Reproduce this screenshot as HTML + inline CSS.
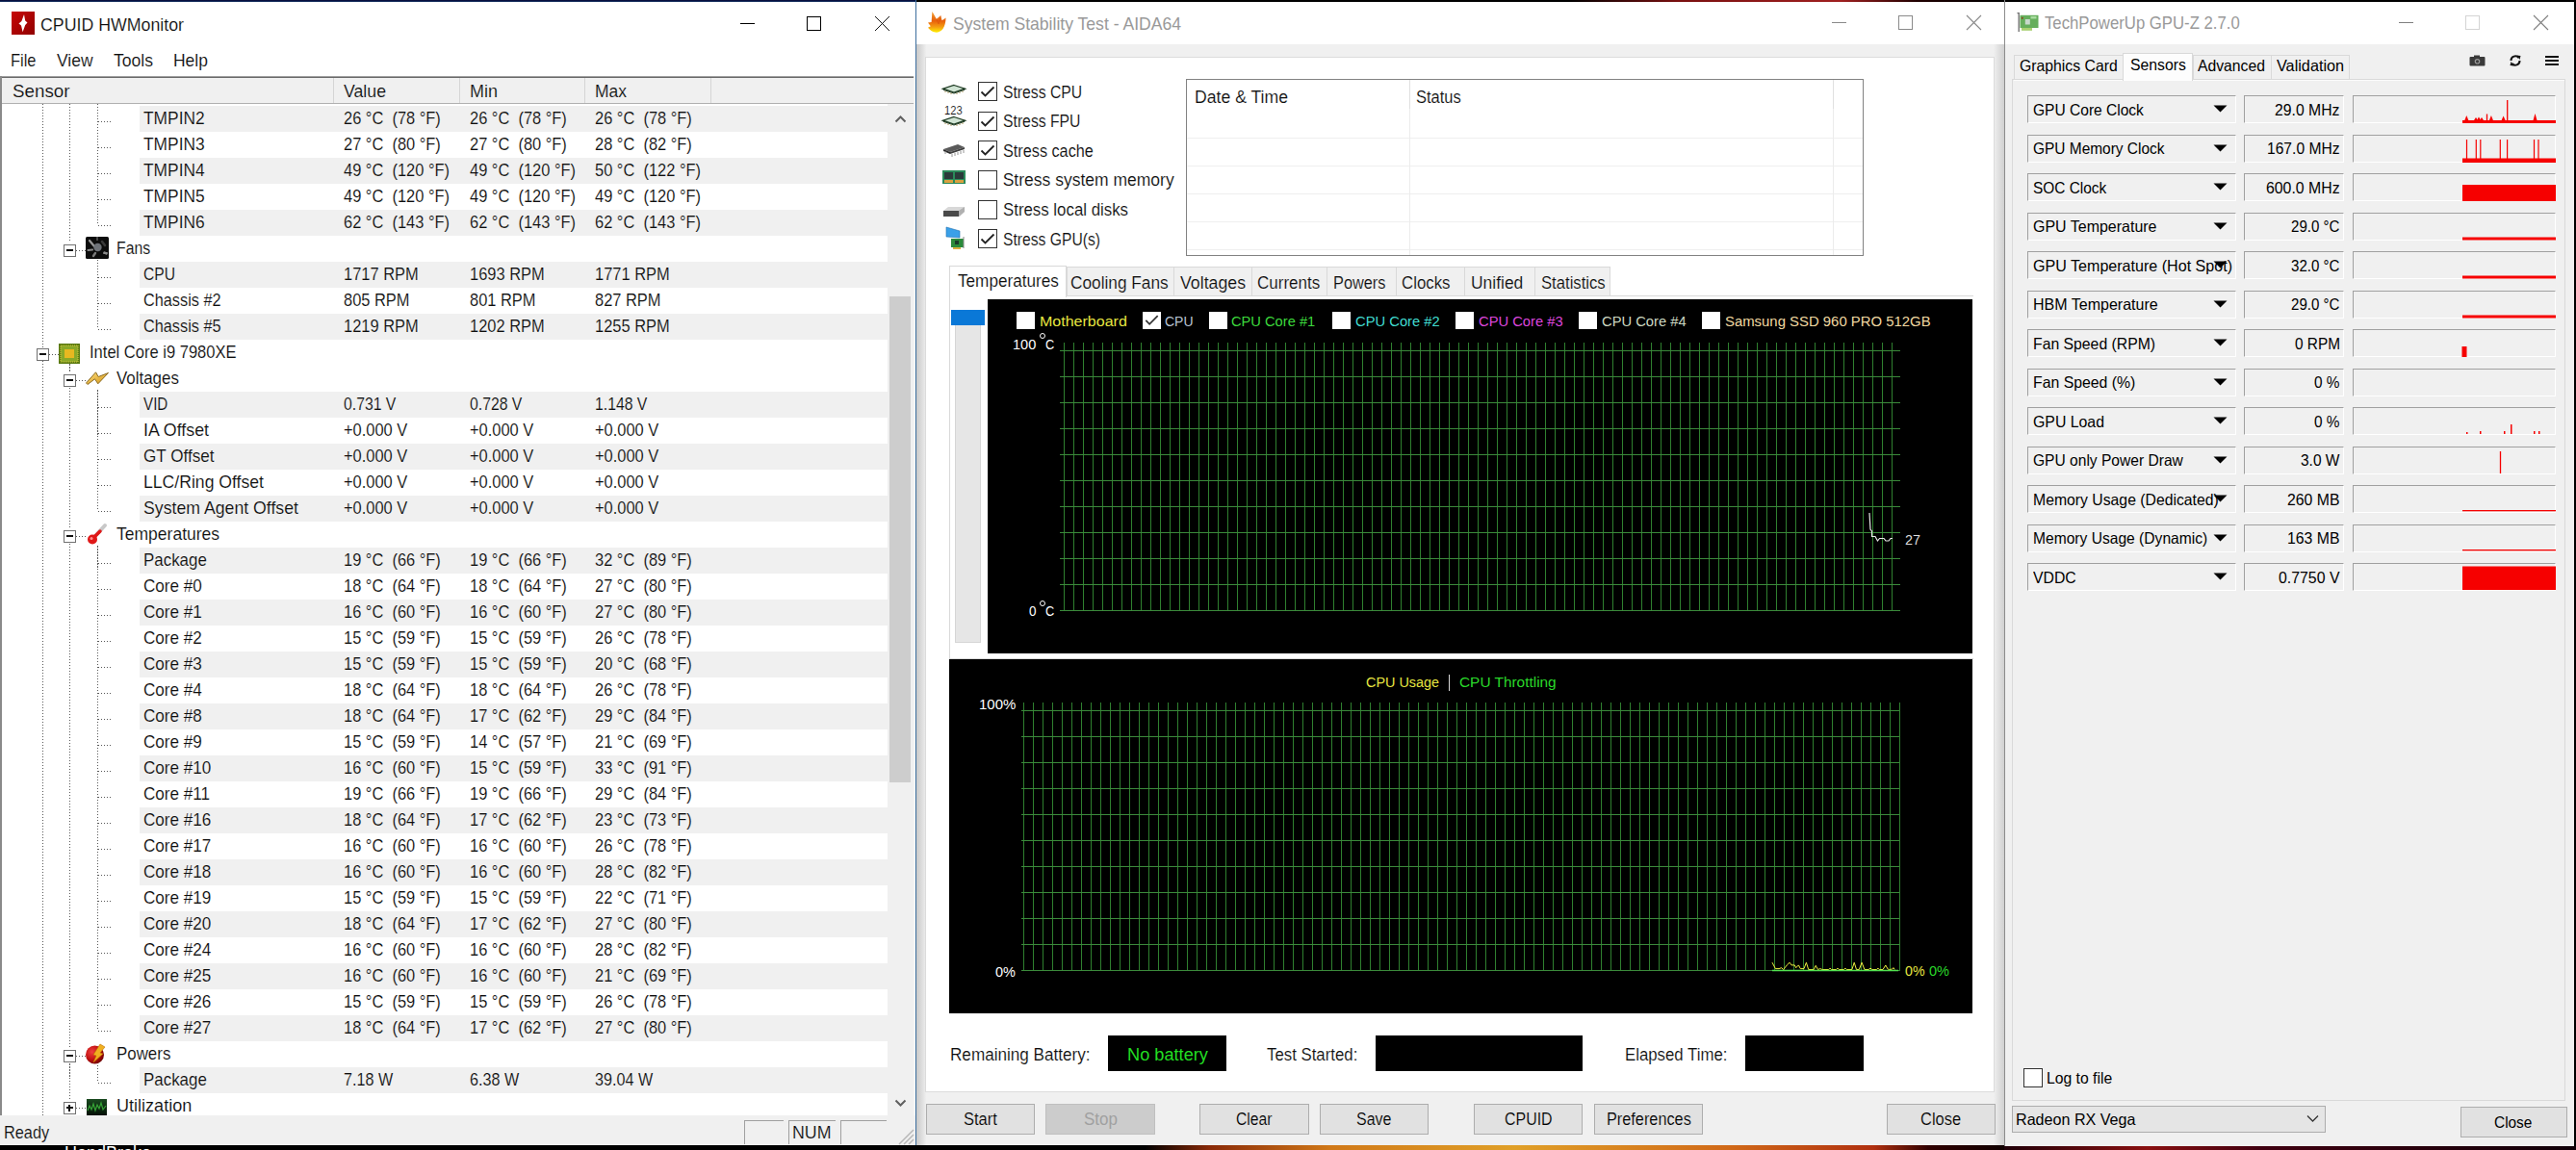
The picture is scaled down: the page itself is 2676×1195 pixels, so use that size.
<!DOCTYPE html>
<html><head><meta charset="utf-8"><title>HWMonitor AIDA64 GPU-Z</title>
<style>
html,body{margin:0;padding:0;width:2676px;height:1195px;overflow:hidden;background:#000}
.a{position:absolute}
.t{position:absolute;white-space:pre;font-family:'Liberation Sans',sans-serif;transform-origin:0 0}
.g{position:absolute;background:#2f802f}
.h{position:absolute;background:#3b8a3b}
svg.a{overflow:visible}
</style></head><body>
<div class='a' style='left:0px;top:0px;width:951px;height:1195px;background:#ffffff;'></div>
<div class='a' style='left:0;top:0;width:952px;height:2px;background:linear-gradient(#000030,#1a3a6a)'></div>
<div class='a' style='left:951px;top:0px;width:1px;height:1190px;background:#3d6e9e;'></div>
<svg class='a' style='left:12px;top:12px' width='24' height='24' viewBox='0 0 24 24'>
      <defs><linearGradient id='hwg' x1='0' y1='0' x2='1' y2='1'><stop offset='0' stop-color='#c80808'/><stop offset='1' stop-color='#900000'/></linearGradient></defs>
      <rect width='24' height='24' fill='url(#hwg)'/>
      <path d='M13 3 L14.2 9.6 L16.5 11.6 L14.2 13.9 L11.6 21.2 L10 14.4 L7.5 12.4 L10.4 10 Z' fill='#fff'/></svg>
<div class='t' style='left:41.50px;top:16.98px;font-size:18.5px;line-height:18.5px;color:#0e0e0e;-webkit-text-stroke:0.18px rgba(255,255,255,0.8);transform:scaleX(0.9599);'>CPUID HWMonitor</div>
<div class='a' style='left:769px;top:24px;width:15px;height:1px;background:#000;'></div>
<div class='a' style='left:838px;top:17px;width:15px;height:15px;border:1px solid #000;box-sizing:border-box;'></div>
<svg class='a' style='left:908px;top:16px' width='17' height='17' viewBox='0 0 17 17'><path d='M1 1 L16 16 M16 1 L1 16' stroke='#000' stroke-width='0.9'/></svg>
<div class='t' style='left:11.10px;top:54.07px;font-size:18.5px;line-height:18.5px;color:#0e0e0e;-webkit-text-stroke:0.18px rgba(255,255,255,0.8);transform:scaleX(0.8889);'>File</div>
<div class='t' style='left:59.00px;top:54.07px;font-size:18.5px;line-height:18.5px;color:#0e0e0e;-webkit-text-stroke:0.18px rgba(255,255,255,0.8);transform:scaleX(0.9430);'>View</div>
<div class='t' style='left:117.50px;top:54.07px;font-size:18.5px;line-height:18.5px;color:#0e0e0e;-webkit-text-stroke:0.18px rgba(255,255,255,0.8);transform:scaleX(0.9490);'>Tools</div>
<div class='t' style='left:180.40px;top:54.07px;font-size:18.5px;line-height:18.5px;color:#0e0e0e;-webkit-text-stroke:0.18px rgba(255,255,255,0.8);transform:scaleX(0.9432);'>Help</div>
<div class='a' style='left:0px;top:79px;width:951px;height:1px;background:#a0a0a0;'></div>
<div class='a' style='left:0px;top:80px;width:951px;height:1px;background:#696969;'></div>
<div class='a' style='left:0px;top:79px;width:2px;height:1080px;background:#8a8a8a;'></div>
<div class='a' style='left:949px;top:79px;width:2px;height:1080px;background:#f5f5f5;'></div>
<div class='a' style='left:2px;top:81px;width:947px;height:26px;background:#f0f0f0;'></div>
<div class='a' style='left:2px;top:106.5px;width:947px;height:1.5px;background:#b0b0b0;'></div>
<div class='a' style='left:346px;top:81px;width:1px;height:26px;background:#d5d5d5;'></div>
<div class='a' style='left:477px;top:81px;width:1px;height:26px;background:#d5d5d5;'></div>
<div class='a' style='left:607px;top:81px;width:1px;height:26px;background:#d5d5d5;'></div>
<div class='a' style='left:738px;top:81px;width:1px;height:26px;background:#d5d5d5;'></div>
<div class='t' style='left:12.50px;top:86.48px;font-size:18.5px;line-height:18.5px;color:#0e0e0e;-webkit-text-stroke:0.18px rgba(255,255,255,0.8);transform:scaleX(1.0149);'>Sensor</div>
<div class='t' style='left:357.00px;top:86.48px;font-size:18.5px;line-height:18.5px;color:#0e0e0e;-webkit-text-stroke:0.18px rgba(255,255,255,0.8);transform:scaleX(0.9575);'>Value</div>
<div class='t' style='left:488.00px;top:86.48px;font-size:18.5px;line-height:18.5px;color:#0e0e0e;-webkit-text-stroke:0.18px rgba(255,255,255,0.8);transform:scaleX(0.9727);'>Min</div>
<div class='t' style='left:618.00px;top:86.48px;font-size:18.5px;line-height:18.5px;color:#0e0e0e;-webkit-text-stroke:0.18px rgba(255,255,255,0.8);transform:scaleX(0.9441);'>Max</div>
<div class='a' style='left:2px;top:108px;width:920px;height:1051px;background:#ffffff;'></div>
<div class='a' style='left:922px;top:108px;width:27px;height:1051px;background:#f0f0f0;'></div>
<div class='a' style='left:924px;top:308px;width:22px;height:505px;background:#cdcdcd;'></div>
<svg class='a' style='left:929px;top:119px' width='13' height='9' viewBox='0 0 13 9'><path d='M1.5 7.5 L6.5 2.5 L11.5 7.5' stroke='#606060' stroke-width='2' fill='none'/></svg>
<svg class='a' style='left:929px;top:1142px' width='13' height='9' viewBox='0 0 13 9'><path d='M1.5 1.5 L6.5 6.5 L11.5 1.5' stroke='#606060' stroke-width='2' fill='none'/></svg>
<div class='a' style='left:44px;top:108px;width:1px;height:1051px;background:repeating-linear-gradient(to bottom,#5a5a5a 0 1.5px,transparent 1.5px 3px)'></div>
<div class='a' style='left:72px;top:108px;width:1px;height:144px;background:repeating-linear-gradient(to bottom,#5a5a5a 0 1.5px,transparent 1.5px 3px)'></div>
<div class='a' style='left:72px;top:378px;width:1px;height:9px;background:repeating-linear-gradient(to bottom,#5a5a5a 0 1.5px,transparent 1.5px 3px)'></div>
<div class='a' style='left:72px;top:400px;width:1px;height:149px;background:repeating-linear-gradient(to bottom,#5a5a5a 0 1.5px,transparent 1.5px 3px)'></div>
<div class='a' style='left:72px;top:562px;width:1px;height:527px;background:repeating-linear-gradient(to bottom,#5a5a5a 0 1.5px,transparent 1.5px 3px)'></div>
<div class='a' style='left:72px;top:1102px;width:1px;height:41px;background:repeating-linear-gradient(to bottom,#5a5a5a 0 1.5px,transparent 1.5px 3px)'></div>
<div class='a' style='left:72px;top:1156px;width:1px;height:3px;background:repeating-linear-gradient(to bottom,#5a5a5a 0 1.5px,transparent 1.5px 3px)'></div>
<div class='a' style='left:101px;top:108px;width:1px;height:126px;background:repeating-linear-gradient(to bottom,#5a5a5a 0 1.5px,transparent 1.5px 3px)'></div>
<div class='a' style='left:101px;top:270px;width:1px;height:72px;background:repeating-linear-gradient(to bottom,#5a5a5a 0 1.5px,transparent 1.5px 3px)'></div>
<div class='a' style='left:101px;top:405px;width:1px;height:126px;background:repeating-linear-gradient(to bottom,#5a5a5a 0 1.5px,transparent 1.5px 3px)'></div>
<div class='a' style='left:101px;top:567px;width:1px;height:504px;background:repeating-linear-gradient(to bottom,#5a5a5a 0 1.5px,transparent 1.5px 3px)'></div>
<div class='a' style='left:101px;top:1107px;width:1px;height:18px;background:repeating-linear-gradient(to bottom,#5a5a5a 0 1.5px,transparent 1.5px 3px)'></div>
<div class='a' style='left:145px;top:110px;width:777px;height:27px;background:#f0f0f0;'></div>
<div class='a' style='left:102px;top:126px;width:15px;height:1px;background:repeating-linear-gradient(to right,#5a5a5a 0 1.5px,transparent 1.5px 3px)'></div>
<div class='t' style='left:149.00px;top:113.25px;font-size:19px;line-height:19px;color:#0e0e0e;-webkit-text-stroke:0.18px rgba(255,255,255,0.8);transform:scaleX(0.9140);'>TMPIN2</div>
<div class='t' style='left:357.00px;top:113.25px;font-size:19px;line-height:19px;color:#0e0e0e;-webkit-text-stroke:0.18px rgba(255,255,255,0.8);transform:scaleX(0.8650);'>26 °C  (78 °F)</div>
<div class='t' style='left:488.00px;top:113.25px;font-size:19px;line-height:19px;color:#0e0e0e;-webkit-text-stroke:0.18px rgba(255,255,255,0.8);transform:scaleX(0.8650);'>26 °C  (78 °F)</div>
<div class='t' style='left:618.00px;top:113.25px;font-size:19px;line-height:19px;color:#0e0e0e;-webkit-text-stroke:0.18px rgba(255,255,255,0.8);transform:scaleX(0.8650);'>26 °C  (78 °F)</div>
<div class='a' style='left:102px;top:153px;width:15px;height:1px;background:repeating-linear-gradient(to right,#5a5a5a 0 1.5px,transparent 1.5px 3px)'></div>
<div class='t' style='left:149.00px;top:140.25px;font-size:19px;line-height:19px;color:#0e0e0e;-webkit-text-stroke:0.18px rgba(255,255,255,0.8);transform:scaleX(0.9140);'>TMPIN3</div>
<div class='t' style='left:357.00px;top:140.25px;font-size:19px;line-height:19px;color:#0e0e0e;-webkit-text-stroke:0.18px rgba(255,255,255,0.8);transform:scaleX(0.8650);'>27 °C  (80 °F)</div>
<div class='t' style='left:488.00px;top:140.25px;font-size:19px;line-height:19px;color:#0e0e0e;-webkit-text-stroke:0.18px rgba(255,255,255,0.8);transform:scaleX(0.8650);'>27 °C  (80 °F)</div>
<div class='t' style='left:618.00px;top:140.25px;font-size:19px;line-height:19px;color:#0e0e0e;-webkit-text-stroke:0.18px rgba(255,255,255,0.8);transform:scaleX(0.8650);'>28 °C  (82 °F)</div>
<div class='a' style='left:145px;top:164px;width:777px;height:27px;background:#f0f0f0;'></div>
<div class='a' style='left:102px;top:180px;width:15px;height:1px;background:repeating-linear-gradient(to right,#5a5a5a 0 1.5px,transparent 1.5px 3px)'></div>
<div class='t' style='left:149.00px;top:167.25px;font-size:19px;line-height:19px;color:#0e0e0e;-webkit-text-stroke:0.18px rgba(255,255,255,0.8);transform:scaleX(0.9140);'>TMPIN4</div>
<div class='t' style='left:357.00px;top:167.25px;font-size:19px;line-height:19px;color:#0e0e0e;-webkit-text-stroke:0.18px rgba(255,255,255,0.8);transform:scaleX(0.8650);'>49 °C  (120 °F)</div>
<div class='t' style='left:488.00px;top:167.25px;font-size:19px;line-height:19px;color:#0e0e0e;-webkit-text-stroke:0.18px rgba(255,255,255,0.8);transform:scaleX(0.8650);'>49 °C  (120 °F)</div>
<div class='t' style='left:618.00px;top:167.25px;font-size:19px;line-height:19px;color:#0e0e0e;-webkit-text-stroke:0.18px rgba(255,255,255,0.8);transform:scaleX(0.8650);'>50 °C  (122 °F)</div>
<div class='a' style='left:102px;top:207px;width:15px;height:1px;background:repeating-linear-gradient(to right,#5a5a5a 0 1.5px,transparent 1.5px 3px)'></div>
<div class='t' style='left:149.00px;top:194.25px;font-size:19px;line-height:19px;color:#0e0e0e;-webkit-text-stroke:0.18px rgba(255,255,255,0.8);transform:scaleX(0.9140);'>TMPIN5</div>
<div class='t' style='left:357.00px;top:194.25px;font-size:19px;line-height:19px;color:#0e0e0e;-webkit-text-stroke:0.18px rgba(255,255,255,0.8);transform:scaleX(0.8650);'>49 °C  (120 °F)</div>
<div class='t' style='left:488.00px;top:194.25px;font-size:19px;line-height:19px;color:#0e0e0e;-webkit-text-stroke:0.18px rgba(255,255,255,0.8);transform:scaleX(0.8650);'>49 °C  (120 °F)</div>
<div class='t' style='left:618.00px;top:194.25px;font-size:19px;line-height:19px;color:#0e0e0e;-webkit-text-stroke:0.18px rgba(255,255,255,0.8);transform:scaleX(0.8650);'>49 °C  (120 °F)</div>
<div class='a' style='left:145px;top:218px;width:777px;height:27px;background:#f0f0f0;'></div>
<div class='a' style='left:102px;top:234px;width:15px;height:1px;background:repeating-linear-gradient(to right,#5a5a5a 0 1.5px,transparent 1.5px 3px)'></div>
<div class='t' style='left:149.00px;top:221.25px;font-size:19px;line-height:19px;color:#0e0e0e;-webkit-text-stroke:0.18px rgba(255,255,255,0.8);transform:scaleX(0.9140);'>TMPIN6</div>
<div class='t' style='left:357.00px;top:221.25px;font-size:19px;line-height:19px;color:#0e0e0e;-webkit-text-stroke:0.18px rgba(255,255,255,0.8);transform:scaleX(0.8650);'>62 °C  (143 °F)</div>
<div class='t' style='left:488.00px;top:221.25px;font-size:19px;line-height:19px;color:#0e0e0e;-webkit-text-stroke:0.18px rgba(255,255,255,0.8);transform:scaleX(0.8650);'>62 °C  (143 °F)</div>
<div class='t' style='left:618.00px;top:221.25px;font-size:19px;line-height:19px;color:#0e0e0e;-webkit-text-stroke:0.18px rgba(255,255,255,0.8);transform:scaleX(0.8650);'>62 °C  (143 °F)</div>
<div class='a' style='left:79px;top:260px;width:10px;height:1px;background:repeating-linear-gradient(to right,#5a5a5a 0 1.5px,transparent 1.5px 3px)'></div>
<div class='a' style='left:65.5px;top:253.5px;width:13.5px;height:13.5px;border:1.5px solid #707070;box-sizing:border-box;background:#fff'></div>
<div class='a' style='left:68.5px;top:259.2px;width:7.5px;height:1.8px;background:#111'></div>
<svg class='a' style='left:88.5px;top:246px' width='24' height='23' viewBox='0 0 24 23'>
        <rect x='0' y='0' width='24' height='23' rx='1.5' fill='#0c0c0c'/>
        <path d='M4 4 L9 10' stroke='#9a9a9a' stroke-width='2.2' stroke-linecap='round'/>
        <path d='M2.5 14 L7 13.5' stroke='#8a8a8a' stroke-width='2.2' stroke-linecap='round'/>
        <path d='M8 20 L10 17' stroke='#7a7a7a' stroke-width='2.4' stroke-linecap='round'/>
        <path d='M19.5 16 L21.5 18' stroke='#6a6a6a' stroke-width='2' stroke-linecap='round'/>
        <path d='M19 17 L22 17' stroke='#8a8a8a' stroke-width='2' stroke-linecap='round'/>
        <path d='M17 5 L20 9' stroke='#3a3a3a' stroke-width='2.5' stroke-linecap='round'/>
        <path d='M12 0 L12 4' stroke='#5a5a5a' stroke-width='1.5'/>
        <circle cx='12.5' cy='11' r='4.2' fill='#6e7278'/></svg>
<div class='t' style='left:120.80px;top:248.25px;font-size:19px;line-height:19px;color:#0e0e0e;-webkit-text-stroke:0.18px rgba(255,255,255,0.8);transform:scaleX(0.8330);'>Fans</div>
<div class='a' style='left:145px;top:272px;width:777px;height:27px;background:#f0f0f0;'></div>
<div class='a' style='left:102px;top:288px;width:15px;height:1px;background:repeating-linear-gradient(to right,#5a5a5a 0 1.5px,transparent 1.5px 3px)'></div>
<div class='t' style='left:149.00px;top:275.25px;font-size:19px;line-height:19px;color:#0e0e0e;-webkit-text-stroke:0.18px rgba(255,255,255,0.8);transform:scaleX(0.8220);'>CPU</div>
<div class='t' style='left:357.00px;top:275.25px;font-size:19px;line-height:19px;color:#0e0e0e;-webkit-text-stroke:0.18px rgba(255,255,255,0.8);transform:scaleX(0.8650);'>1717 RPM</div>
<div class='t' style='left:488.00px;top:275.25px;font-size:19px;line-height:19px;color:#0e0e0e;-webkit-text-stroke:0.18px rgba(255,255,255,0.8);transform:scaleX(0.8650);'>1693 RPM</div>
<div class='t' style='left:618.00px;top:275.25px;font-size:19px;line-height:19px;color:#0e0e0e;-webkit-text-stroke:0.18px rgba(255,255,255,0.8);transform:scaleX(0.8650);'>1771 RPM</div>
<div class='a' style='left:102px;top:315px;width:15px;height:1px;background:repeating-linear-gradient(to right,#5a5a5a 0 1.5px,transparent 1.5px 3px)'></div>
<div class='t' style='left:149.00px;top:302.25px;font-size:19px;line-height:19px;color:#0e0e0e;-webkit-text-stroke:0.18px rgba(255,255,255,0.8);transform:scaleX(0.8570);'>Chassis #2</div>
<div class='t' style='left:357.00px;top:302.25px;font-size:19px;line-height:19px;color:#0e0e0e;-webkit-text-stroke:0.18px rgba(255,255,255,0.8);transform:scaleX(0.8650);'>805 RPM</div>
<div class='t' style='left:488.00px;top:302.25px;font-size:19px;line-height:19px;color:#0e0e0e;-webkit-text-stroke:0.18px rgba(255,255,255,0.8);transform:scaleX(0.8650);'>801 RPM</div>
<div class='t' style='left:618.00px;top:302.25px;font-size:19px;line-height:19px;color:#0e0e0e;-webkit-text-stroke:0.18px rgba(255,255,255,0.8);transform:scaleX(0.8650);'>827 RPM</div>
<div class='a' style='left:145px;top:326px;width:777px;height:27px;background:#f0f0f0;'></div>
<div class='a' style='left:102px;top:342px;width:15px;height:1px;background:repeating-linear-gradient(to right,#5a5a5a 0 1.5px,transparent 1.5px 3px)'></div>
<div class='t' style='left:149.00px;top:329.25px;font-size:19px;line-height:19px;color:#0e0e0e;-webkit-text-stroke:0.18px rgba(255,255,255,0.8);transform:scaleX(0.8570);'>Chassis #5</div>
<div class='t' style='left:357.00px;top:329.25px;font-size:19px;line-height:19px;color:#0e0e0e;-webkit-text-stroke:0.18px rgba(255,255,255,0.8);transform:scaleX(0.8650);'>1219 RPM</div>
<div class='t' style='left:488.00px;top:329.25px;font-size:19px;line-height:19px;color:#0e0e0e;-webkit-text-stroke:0.18px rgba(255,255,255,0.8);transform:scaleX(0.8650);'>1202 RPM</div>
<div class='t' style='left:618.00px;top:329.25px;font-size:19px;line-height:19px;color:#0e0e0e;-webkit-text-stroke:0.18px rgba(255,255,255,0.8);transform:scaleX(0.8650);'>1255 RPM</div>
<div class='a' style='left:51px;top:368px;width:10px;height:1px;background:repeating-linear-gradient(to right,#5a5a5a 0 1.5px,transparent 1.5px 3px)'></div>
<div class='a' style='left:37.5px;top:361.5px;width:13.5px;height:13.5px;border:1.5px solid #707070;box-sizing:border-box;background:#fff'></div>
<div class='a' style='left:40.5px;top:367.2px;width:7.5px;height:1.8px;background:#111'></div>
<svg class='a' style='left:61px;top:357px' width='22' height='21' viewBox='0 0 22 21'>
        <rect x='0' y='0' width='22' height='21' fill='#5a7a10'/>
        <rect x='2' y='2' width='18' height='17' fill='#8aa828' stroke='#d8c840' stroke-dasharray='1 1'/>
        <rect x='6' y='6' width='10' height='9' fill='#e8b820'/></svg>
<div class='t' style='left:92.60px;top:356.25px;font-size:19px;line-height:19px;color:#0e0e0e;-webkit-text-stroke:0.18px rgba(255,255,255,0.8);transform:scaleX(0.8700);'>Intel Core i9 7980XE</div>
<div class='a' style='left:79px;top:395px;width:10px;height:1px;background:repeating-linear-gradient(to right,#5a5a5a 0 1.5px,transparent 1.5px 3px)'></div>
<div class='a' style='left:65.5px;top:388.5px;width:13.5px;height:13.5px;border:1.5px solid #707070;box-sizing:border-box;background:#fff'></div>
<div class='a' style='left:68.5px;top:394.2px;width:7.5px;height:1.8px;background:#111'></div>
<svg class='a' style='left:88px;top:385px' width='26' height='16' viewBox='0 0 26 16'>
        <defs><linearGradient id='vg' x1='0' y1='0' x2='1' y2='1'><stop offset='0' stop-color='#ffe080'/><stop offset='1' stop-color='#d09010'/></linearGradient></defs>
        <path d='M1.5 13 L11.5 1.8 L14.2 6.5 L24.5 2.5 L13.8 13.8 L10.5 8.8 L3 14.5 Z' fill='url(#vg)' stroke='#8a6a20' stroke-width='1'/></svg>
<div class='t' style='left:120.80px;top:383.25px;font-size:19px;line-height:19px;color:#0e0e0e;-webkit-text-stroke:0.18px rgba(255,255,255,0.8);transform:scaleX(0.8900);'>Voltages</div>
<div class='a' style='left:145px;top:407px;width:777px;height:27px;background:#f0f0f0;'></div>
<div class='a' style='left:102px;top:423px;width:15px;height:1px;background:repeating-linear-gradient(to right,#5a5a5a 0 1.5px,transparent 1.5px 3px)'></div>
<div class='t' style='left:149.00px;top:410.25px;font-size:19px;line-height:19px;color:#0e0e0e;-webkit-text-stroke:0.18px rgba(255,255,255,0.8);transform:scaleX(0.8000);'>VID</div>
<div class='t' style='left:357.00px;top:410.25px;font-size:19px;line-height:19px;color:#0e0e0e;-webkit-text-stroke:0.18px rgba(255,255,255,0.8);transform:scaleX(0.8300);'>0.731 V</div>
<div class='t' style='left:488.00px;top:410.25px;font-size:19px;line-height:19px;color:#0e0e0e;-webkit-text-stroke:0.18px rgba(255,255,255,0.8);transform:scaleX(0.8300);'>0.728 V</div>
<div class='t' style='left:618.00px;top:410.25px;font-size:19px;line-height:19px;color:#0e0e0e;-webkit-text-stroke:0.18px rgba(255,255,255,0.8);transform:scaleX(0.8300);'>1.148 V</div>
<div class='a' style='left:102px;top:450px;width:15px;height:1px;background:repeating-linear-gradient(to right,#5a5a5a 0 1.5px,transparent 1.5px 3px)'></div>
<div class='t' style='left:149.00px;top:437.25px;font-size:19px;line-height:19px;color:#0e0e0e;-webkit-text-stroke:0.18px rgba(255,255,255,0.8);transform:scaleX(0.9375);'>IA Offset</div>
<div class='t' style='left:357.00px;top:437.25px;font-size:19px;line-height:19px;color:#0e0e0e;-webkit-text-stroke:0.18px rgba(255,255,255,0.8);transform:scaleX(0.8650);'>+0.000 V</div>
<div class='t' style='left:488.00px;top:437.25px;font-size:19px;line-height:19px;color:#0e0e0e;-webkit-text-stroke:0.18px rgba(255,255,255,0.8);transform:scaleX(0.8650);'>+0.000 V</div>
<div class='t' style='left:618.00px;top:437.25px;font-size:19px;line-height:19px;color:#0e0e0e;-webkit-text-stroke:0.18px rgba(255,255,255,0.8);transform:scaleX(0.8650);'>+0.000 V</div>
<div class='a' style='left:145px;top:461px;width:777px;height:27px;background:#f0f0f0;'></div>
<div class='a' style='left:102px;top:477px;width:15px;height:1px;background:repeating-linear-gradient(to right,#5a5a5a 0 1.5px,transparent 1.5px 3px)'></div>
<div class='t' style='left:149.00px;top:464.25px;font-size:19px;line-height:19px;color:#0e0e0e;-webkit-text-stroke:0.18px rgba(255,255,255,0.8);transform:scaleX(0.9000);'>GT Offset</div>
<div class='t' style='left:357.00px;top:464.25px;font-size:19px;line-height:19px;color:#0e0e0e;-webkit-text-stroke:0.18px rgba(255,255,255,0.8);transform:scaleX(0.8650);'>+0.000 V</div>
<div class='t' style='left:488.00px;top:464.25px;font-size:19px;line-height:19px;color:#0e0e0e;-webkit-text-stroke:0.18px rgba(255,255,255,0.8);transform:scaleX(0.8650);'>+0.000 V</div>
<div class='t' style='left:618.00px;top:464.25px;font-size:19px;line-height:19px;color:#0e0e0e;-webkit-text-stroke:0.18px rgba(255,255,255,0.8);transform:scaleX(0.8650);'>+0.000 V</div>
<div class='a' style='left:102px;top:504px;width:15px;height:1px;background:repeating-linear-gradient(to right,#5a5a5a 0 1.5px,transparent 1.5px 3px)'></div>
<div class='t' style='left:149.00px;top:491.25px;font-size:19px;line-height:19px;color:#0e0e0e;-webkit-text-stroke:0.18px rgba(255,255,255,0.8);transform:scaleX(0.9270);'>LLC/Ring Offset</div>
<div class='t' style='left:357.00px;top:491.25px;font-size:19px;line-height:19px;color:#0e0e0e;-webkit-text-stroke:0.18px rgba(255,255,255,0.8);transform:scaleX(0.8650);'>+0.000 V</div>
<div class='t' style='left:488.00px;top:491.25px;font-size:19px;line-height:19px;color:#0e0e0e;-webkit-text-stroke:0.18px rgba(255,255,255,0.8);transform:scaleX(0.8650);'>+0.000 V</div>
<div class='t' style='left:618.00px;top:491.25px;font-size:19px;line-height:19px;color:#0e0e0e;-webkit-text-stroke:0.18px rgba(255,255,255,0.8);transform:scaleX(0.8650);'>+0.000 V</div>
<div class='a' style='left:145px;top:515px;width:777px;height:27px;background:#f0f0f0;'></div>
<div class='a' style='left:102px;top:531px;width:15px;height:1px;background:repeating-linear-gradient(to right,#5a5a5a 0 1.5px,transparent 1.5px 3px)'></div>
<div class='t' style='left:149.00px;top:518.25px;font-size:19px;line-height:19px;color:#0e0e0e;-webkit-text-stroke:0.18px rgba(255,255,255,0.8);transform:scaleX(0.9310);'>System Agent Offset</div>
<div class='t' style='left:357.00px;top:518.25px;font-size:19px;line-height:19px;color:#0e0e0e;-webkit-text-stroke:0.18px rgba(255,255,255,0.8);transform:scaleX(0.8650);'>+0.000 V</div>
<div class='t' style='left:488.00px;top:518.25px;font-size:19px;line-height:19px;color:#0e0e0e;-webkit-text-stroke:0.18px rgba(255,255,255,0.8);transform:scaleX(0.8650);'>+0.000 V</div>
<div class='t' style='left:618.00px;top:518.25px;font-size:19px;line-height:19px;color:#0e0e0e;-webkit-text-stroke:0.18px rgba(255,255,255,0.8);transform:scaleX(0.8650);'>+0.000 V</div>
<div class='a' style='left:79px;top:557px;width:10px;height:1px;background:repeating-linear-gradient(to right,#5a5a5a 0 1.5px,transparent 1.5px 3px)'></div>
<div class='a' style='left:65.5px;top:550.5px;width:13.5px;height:13.5px;border:1.5px solid #707070;box-sizing:border-box;background:#fff'></div>
<div class='a' style='left:68.5px;top:556.2px;width:7.5px;height:1.8px;background:#111'></div>
<svg class='a' style='left:89px;top:543px' width='24' height='24' viewBox='0 0 24 24'>
        <path d='M20 3 L9 15' stroke='#c8c8c8' stroke-width='4' stroke-linecap='round'/>
        <path d='M15 9 L8 16' stroke='#e01818' stroke-width='3.5' stroke-linecap='round'/>
        <circle cx='7' cy='17.5' r='5' fill='#e01818'/><circle cx='6' cy='16.5' r='1.5' fill='#ff9090'/></svg>
<div class='t' style='left:120.80px;top:545.25px;font-size:19px;line-height:19px;color:#0e0e0e;-webkit-text-stroke:0.18px rgba(255,255,255,0.8);transform:scaleX(0.9220);'>Temperatures</div>
<div class='a' style='left:145px;top:569px;width:777px;height:27px;background:#f0f0f0;'></div>
<div class='a' style='left:102px;top:585px;width:15px;height:1px;background:repeating-linear-gradient(to right,#5a5a5a 0 1.5px,transparent 1.5px 3px)'></div>
<div class='t' style='left:149.00px;top:572.25px;font-size:19px;line-height:19px;color:#0e0e0e;-webkit-text-stroke:0.18px rgba(255,255,255,0.8);transform:scaleX(0.8900);'>Package</div>
<div class='t' style='left:357.00px;top:572.25px;font-size:19px;line-height:19px;color:#0e0e0e;-webkit-text-stroke:0.18px rgba(255,255,255,0.8);transform:scaleX(0.8650);'>19 °C  (66 °F)</div>
<div class='t' style='left:488.00px;top:572.25px;font-size:19px;line-height:19px;color:#0e0e0e;-webkit-text-stroke:0.18px rgba(255,255,255,0.8);transform:scaleX(0.8650);'>19 °C  (66 °F)</div>
<div class='t' style='left:618.00px;top:572.25px;font-size:19px;line-height:19px;color:#0e0e0e;-webkit-text-stroke:0.18px rgba(255,255,255,0.8);transform:scaleX(0.8650);'>32 °C  (89 °F)</div>
<div class='a' style='left:102px;top:612px;width:15px;height:1px;background:repeating-linear-gradient(to right,#5a5a5a 0 1.5px,transparent 1.5px 3px)'></div>
<div class='t' style='left:149.00px;top:599.25px;font-size:19px;line-height:19px;color:#0e0e0e;-webkit-text-stroke:0.18px rgba(255,255,255,0.8);transform:scaleX(0.9000);'>Core #0</div>
<div class='t' style='left:357.00px;top:599.25px;font-size:19px;line-height:19px;color:#0e0e0e;-webkit-text-stroke:0.18px rgba(255,255,255,0.8);transform:scaleX(0.8650);'>18 °C  (64 °F)</div>
<div class='t' style='left:488.00px;top:599.25px;font-size:19px;line-height:19px;color:#0e0e0e;-webkit-text-stroke:0.18px rgba(255,255,255,0.8);transform:scaleX(0.8650);'>18 °C  (64 °F)</div>
<div class='t' style='left:618.00px;top:599.25px;font-size:19px;line-height:19px;color:#0e0e0e;-webkit-text-stroke:0.18px rgba(255,255,255,0.8);transform:scaleX(0.8650);'>27 °C  (80 °F)</div>
<div class='a' style='left:145px;top:623px;width:777px;height:27px;background:#f0f0f0;'></div>
<div class='a' style='left:102px;top:639px;width:15px;height:1px;background:repeating-linear-gradient(to right,#5a5a5a 0 1.5px,transparent 1.5px 3px)'></div>
<div class='t' style='left:149.00px;top:626.25px;font-size:19px;line-height:19px;color:#0e0e0e;-webkit-text-stroke:0.18px rgba(255,255,255,0.8);transform:scaleX(0.9000);'>Core #1</div>
<div class='t' style='left:357.00px;top:626.25px;font-size:19px;line-height:19px;color:#0e0e0e;-webkit-text-stroke:0.18px rgba(255,255,255,0.8);transform:scaleX(0.8650);'>16 °C  (60 °F)</div>
<div class='t' style='left:488.00px;top:626.25px;font-size:19px;line-height:19px;color:#0e0e0e;-webkit-text-stroke:0.18px rgba(255,255,255,0.8);transform:scaleX(0.8650);'>16 °C  (60 °F)</div>
<div class='t' style='left:618.00px;top:626.25px;font-size:19px;line-height:19px;color:#0e0e0e;-webkit-text-stroke:0.18px rgba(255,255,255,0.8);transform:scaleX(0.8650);'>27 °C  (80 °F)</div>
<div class='a' style='left:102px;top:666px;width:15px;height:1px;background:repeating-linear-gradient(to right,#5a5a5a 0 1.5px,transparent 1.5px 3px)'></div>
<div class='t' style='left:149.00px;top:653.25px;font-size:19px;line-height:19px;color:#0e0e0e;-webkit-text-stroke:0.18px rgba(255,255,255,0.8);transform:scaleX(0.9000);'>Core #2</div>
<div class='t' style='left:357.00px;top:653.25px;font-size:19px;line-height:19px;color:#0e0e0e;-webkit-text-stroke:0.18px rgba(255,255,255,0.8);transform:scaleX(0.8650);'>15 °C  (59 °F)</div>
<div class='t' style='left:488.00px;top:653.25px;font-size:19px;line-height:19px;color:#0e0e0e;-webkit-text-stroke:0.18px rgba(255,255,255,0.8);transform:scaleX(0.8650);'>15 °C  (59 °F)</div>
<div class='t' style='left:618.00px;top:653.25px;font-size:19px;line-height:19px;color:#0e0e0e;-webkit-text-stroke:0.18px rgba(255,255,255,0.8);transform:scaleX(0.8650);'>26 °C  (78 °F)</div>
<div class='a' style='left:145px;top:677px;width:777px;height:27px;background:#f0f0f0;'></div>
<div class='a' style='left:102px;top:693px;width:15px;height:1px;background:repeating-linear-gradient(to right,#5a5a5a 0 1.5px,transparent 1.5px 3px)'></div>
<div class='t' style='left:149.00px;top:680.25px;font-size:19px;line-height:19px;color:#0e0e0e;-webkit-text-stroke:0.18px rgba(255,255,255,0.8);transform:scaleX(0.9000);'>Core #3</div>
<div class='t' style='left:357.00px;top:680.25px;font-size:19px;line-height:19px;color:#0e0e0e;-webkit-text-stroke:0.18px rgba(255,255,255,0.8);transform:scaleX(0.8650);'>15 °C  (59 °F)</div>
<div class='t' style='left:488.00px;top:680.25px;font-size:19px;line-height:19px;color:#0e0e0e;-webkit-text-stroke:0.18px rgba(255,255,255,0.8);transform:scaleX(0.8650);'>15 °C  (59 °F)</div>
<div class='t' style='left:618.00px;top:680.25px;font-size:19px;line-height:19px;color:#0e0e0e;-webkit-text-stroke:0.18px rgba(255,255,255,0.8);transform:scaleX(0.8650);'>20 °C  (68 °F)</div>
<div class='a' style='left:102px;top:720px;width:15px;height:1px;background:repeating-linear-gradient(to right,#5a5a5a 0 1.5px,transparent 1.5px 3px)'></div>
<div class='t' style='left:149.00px;top:707.25px;font-size:19px;line-height:19px;color:#0e0e0e;-webkit-text-stroke:0.18px rgba(255,255,255,0.8);transform:scaleX(0.9000);'>Core #4</div>
<div class='t' style='left:357.00px;top:707.25px;font-size:19px;line-height:19px;color:#0e0e0e;-webkit-text-stroke:0.18px rgba(255,255,255,0.8);transform:scaleX(0.8650);'>18 °C  (64 °F)</div>
<div class='t' style='left:488.00px;top:707.25px;font-size:19px;line-height:19px;color:#0e0e0e;-webkit-text-stroke:0.18px rgba(255,255,255,0.8);transform:scaleX(0.8650);'>18 °C  (64 °F)</div>
<div class='t' style='left:618.00px;top:707.25px;font-size:19px;line-height:19px;color:#0e0e0e;-webkit-text-stroke:0.18px rgba(255,255,255,0.8);transform:scaleX(0.8650);'>26 °C  (78 °F)</div>
<div class='a' style='left:145px;top:731px;width:777px;height:27px;background:#f0f0f0;'></div>
<div class='a' style='left:102px;top:747px;width:15px;height:1px;background:repeating-linear-gradient(to right,#5a5a5a 0 1.5px,transparent 1.5px 3px)'></div>
<div class='t' style='left:149.00px;top:734.25px;font-size:19px;line-height:19px;color:#0e0e0e;-webkit-text-stroke:0.18px rgba(255,255,255,0.8);transform:scaleX(0.9000);'>Core #8</div>
<div class='t' style='left:357.00px;top:734.25px;font-size:19px;line-height:19px;color:#0e0e0e;-webkit-text-stroke:0.18px rgba(255,255,255,0.8);transform:scaleX(0.8650);'>18 °C  (64 °F)</div>
<div class='t' style='left:488.00px;top:734.25px;font-size:19px;line-height:19px;color:#0e0e0e;-webkit-text-stroke:0.18px rgba(255,255,255,0.8);transform:scaleX(0.8650);'>17 °C  (62 °F)</div>
<div class='t' style='left:618.00px;top:734.25px;font-size:19px;line-height:19px;color:#0e0e0e;-webkit-text-stroke:0.18px rgba(255,255,255,0.8);transform:scaleX(0.8650);'>29 °C  (84 °F)</div>
<div class='a' style='left:102px;top:774px;width:15px;height:1px;background:repeating-linear-gradient(to right,#5a5a5a 0 1.5px,transparent 1.5px 3px)'></div>
<div class='t' style='left:149.00px;top:761.25px;font-size:19px;line-height:19px;color:#0e0e0e;-webkit-text-stroke:0.18px rgba(255,255,255,0.8);transform:scaleX(0.9000);'>Core #9</div>
<div class='t' style='left:357.00px;top:761.25px;font-size:19px;line-height:19px;color:#0e0e0e;-webkit-text-stroke:0.18px rgba(255,255,255,0.8);transform:scaleX(0.8650);'>15 °C  (59 °F)</div>
<div class='t' style='left:488.00px;top:761.25px;font-size:19px;line-height:19px;color:#0e0e0e;-webkit-text-stroke:0.18px rgba(255,255,255,0.8);transform:scaleX(0.8650);'>14 °C  (57 °F)</div>
<div class='t' style='left:618.00px;top:761.25px;font-size:19px;line-height:19px;color:#0e0e0e;-webkit-text-stroke:0.18px rgba(255,255,255,0.8);transform:scaleX(0.8650);'>21 °C  (69 °F)</div>
<div class='a' style='left:145px;top:785px;width:777px;height:27px;background:#f0f0f0;'></div>
<div class='a' style='left:102px;top:801px;width:15px;height:1px;background:repeating-linear-gradient(to right,#5a5a5a 0 1.5px,transparent 1.5px 3px)'></div>
<div class='t' style='left:149.00px;top:788.25px;font-size:19px;line-height:19px;color:#0e0e0e;-webkit-text-stroke:0.18px rgba(255,255,255,0.8);transform:scaleX(0.9000);'>Core #10</div>
<div class='t' style='left:357.00px;top:788.25px;font-size:19px;line-height:19px;color:#0e0e0e;-webkit-text-stroke:0.18px rgba(255,255,255,0.8);transform:scaleX(0.8650);'>16 °C  (60 °F)</div>
<div class='t' style='left:488.00px;top:788.25px;font-size:19px;line-height:19px;color:#0e0e0e;-webkit-text-stroke:0.18px rgba(255,255,255,0.8);transform:scaleX(0.8650);'>15 °C  (59 °F)</div>
<div class='t' style='left:618.00px;top:788.25px;font-size:19px;line-height:19px;color:#0e0e0e;-webkit-text-stroke:0.18px rgba(255,255,255,0.8);transform:scaleX(0.8650);'>33 °C  (91 °F)</div>
<div class='a' style='left:102px;top:828px;width:15px;height:1px;background:repeating-linear-gradient(to right,#5a5a5a 0 1.5px,transparent 1.5px 3px)'></div>
<div class='t' style='left:149.00px;top:815.25px;font-size:19px;line-height:19px;color:#0e0e0e;-webkit-text-stroke:0.18px rgba(255,255,255,0.8);transform:scaleX(0.9000);'>Core #11</div>
<div class='t' style='left:357.00px;top:815.25px;font-size:19px;line-height:19px;color:#0e0e0e;-webkit-text-stroke:0.18px rgba(255,255,255,0.8);transform:scaleX(0.8650);'>19 °C  (66 °F)</div>
<div class='t' style='left:488.00px;top:815.25px;font-size:19px;line-height:19px;color:#0e0e0e;-webkit-text-stroke:0.18px rgba(255,255,255,0.8);transform:scaleX(0.8650);'>19 °C  (66 °F)</div>
<div class='t' style='left:618.00px;top:815.25px;font-size:19px;line-height:19px;color:#0e0e0e;-webkit-text-stroke:0.18px rgba(255,255,255,0.8);transform:scaleX(0.8650);'>29 °C  (84 °F)</div>
<div class='a' style='left:145px;top:839px;width:777px;height:27px;background:#f0f0f0;'></div>
<div class='a' style='left:102px;top:855px;width:15px;height:1px;background:repeating-linear-gradient(to right,#5a5a5a 0 1.5px,transparent 1.5px 3px)'></div>
<div class='t' style='left:149.00px;top:842.25px;font-size:19px;line-height:19px;color:#0e0e0e;-webkit-text-stroke:0.18px rgba(255,255,255,0.8);transform:scaleX(0.9000);'>Core #16</div>
<div class='t' style='left:357.00px;top:842.25px;font-size:19px;line-height:19px;color:#0e0e0e;-webkit-text-stroke:0.18px rgba(255,255,255,0.8);transform:scaleX(0.8650);'>18 °C  (64 °F)</div>
<div class='t' style='left:488.00px;top:842.25px;font-size:19px;line-height:19px;color:#0e0e0e;-webkit-text-stroke:0.18px rgba(255,255,255,0.8);transform:scaleX(0.8650);'>17 °C  (62 °F)</div>
<div class='t' style='left:618.00px;top:842.25px;font-size:19px;line-height:19px;color:#0e0e0e;-webkit-text-stroke:0.18px rgba(255,255,255,0.8);transform:scaleX(0.8650);'>23 °C  (73 °F)</div>
<div class='a' style='left:102px;top:882px;width:15px;height:1px;background:repeating-linear-gradient(to right,#5a5a5a 0 1.5px,transparent 1.5px 3px)'></div>
<div class='t' style='left:149.00px;top:869.25px;font-size:19px;line-height:19px;color:#0e0e0e;-webkit-text-stroke:0.18px rgba(255,255,255,0.8);transform:scaleX(0.9000);'>Core #17</div>
<div class='t' style='left:357.00px;top:869.25px;font-size:19px;line-height:19px;color:#0e0e0e;-webkit-text-stroke:0.18px rgba(255,255,255,0.8);transform:scaleX(0.8650);'>16 °C  (60 °F)</div>
<div class='t' style='left:488.00px;top:869.25px;font-size:19px;line-height:19px;color:#0e0e0e;-webkit-text-stroke:0.18px rgba(255,255,255,0.8);transform:scaleX(0.8650);'>16 °C  (60 °F)</div>
<div class='t' style='left:618.00px;top:869.25px;font-size:19px;line-height:19px;color:#0e0e0e;-webkit-text-stroke:0.18px rgba(255,255,255,0.8);transform:scaleX(0.8650);'>26 °C  (78 °F)</div>
<div class='a' style='left:145px;top:893px;width:777px;height:27px;background:#f0f0f0;'></div>
<div class='a' style='left:102px;top:909px;width:15px;height:1px;background:repeating-linear-gradient(to right,#5a5a5a 0 1.5px,transparent 1.5px 3px)'></div>
<div class='t' style='left:149.00px;top:896.25px;font-size:19px;line-height:19px;color:#0e0e0e;-webkit-text-stroke:0.18px rgba(255,255,255,0.8);transform:scaleX(0.9000);'>Core #18</div>
<div class='t' style='left:357.00px;top:896.25px;font-size:19px;line-height:19px;color:#0e0e0e;-webkit-text-stroke:0.18px rgba(255,255,255,0.8);transform:scaleX(0.8650);'>16 °C  (60 °F)</div>
<div class='t' style='left:488.00px;top:896.25px;font-size:19px;line-height:19px;color:#0e0e0e;-webkit-text-stroke:0.18px rgba(255,255,255,0.8);transform:scaleX(0.8650);'>16 °C  (60 °F)</div>
<div class='t' style='left:618.00px;top:896.25px;font-size:19px;line-height:19px;color:#0e0e0e;-webkit-text-stroke:0.18px rgba(255,255,255,0.8);transform:scaleX(0.8650);'>28 °C  (82 °F)</div>
<div class='a' style='left:102px;top:936px;width:15px;height:1px;background:repeating-linear-gradient(to right,#5a5a5a 0 1.5px,transparent 1.5px 3px)'></div>
<div class='t' style='left:149.00px;top:923.25px;font-size:19px;line-height:19px;color:#0e0e0e;-webkit-text-stroke:0.18px rgba(255,255,255,0.8);transform:scaleX(0.9000);'>Core #19</div>
<div class='t' style='left:357.00px;top:923.25px;font-size:19px;line-height:19px;color:#0e0e0e;-webkit-text-stroke:0.18px rgba(255,255,255,0.8);transform:scaleX(0.8650);'>15 °C  (59 °F)</div>
<div class='t' style='left:488.00px;top:923.25px;font-size:19px;line-height:19px;color:#0e0e0e;-webkit-text-stroke:0.18px rgba(255,255,255,0.8);transform:scaleX(0.8650);'>15 °C  (59 °F)</div>
<div class='t' style='left:618.00px;top:923.25px;font-size:19px;line-height:19px;color:#0e0e0e;-webkit-text-stroke:0.18px rgba(255,255,255,0.8);transform:scaleX(0.8650);'>22 °C  (71 °F)</div>
<div class='a' style='left:145px;top:947px;width:777px;height:27px;background:#f0f0f0;'></div>
<div class='a' style='left:102px;top:963px;width:15px;height:1px;background:repeating-linear-gradient(to right,#5a5a5a 0 1.5px,transparent 1.5px 3px)'></div>
<div class='t' style='left:149.00px;top:950.25px;font-size:19px;line-height:19px;color:#0e0e0e;-webkit-text-stroke:0.18px rgba(255,255,255,0.8);transform:scaleX(0.9000);'>Core #20</div>
<div class='t' style='left:357.00px;top:950.25px;font-size:19px;line-height:19px;color:#0e0e0e;-webkit-text-stroke:0.18px rgba(255,255,255,0.8);transform:scaleX(0.8650);'>18 °C  (64 °F)</div>
<div class='t' style='left:488.00px;top:950.25px;font-size:19px;line-height:19px;color:#0e0e0e;-webkit-text-stroke:0.18px rgba(255,255,255,0.8);transform:scaleX(0.8650);'>17 °C  (62 °F)</div>
<div class='t' style='left:618.00px;top:950.25px;font-size:19px;line-height:19px;color:#0e0e0e;-webkit-text-stroke:0.18px rgba(255,255,255,0.8);transform:scaleX(0.8650);'>27 °C  (80 °F)</div>
<div class='a' style='left:102px;top:990px;width:15px;height:1px;background:repeating-linear-gradient(to right,#5a5a5a 0 1.5px,transparent 1.5px 3px)'></div>
<div class='t' style='left:149.00px;top:977.25px;font-size:19px;line-height:19px;color:#0e0e0e;-webkit-text-stroke:0.18px rgba(255,255,255,0.8);transform:scaleX(0.9000);'>Core #24</div>
<div class='t' style='left:357.00px;top:977.25px;font-size:19px;line-height:19px;color:#0e0e0e;-webkit-text-stroke:0.18px rgba(255,255,255,0.8);transform:scaleX(0.8650);'>16 °C  (60 °F)</div>
<div class='t' style='left:488.00px;top:977.25px;font-size:19px;line-height:19px;color:#0e0e0e;-webkit-text-stroke:0.18px rgba(255,255,255,0.8);transform:scaleX(0.8650);'>16 °C  (60 °F)</div>
<div class='t' style='left:618.00px;top:977.25px;font-size:19px;line-height:19px;color:#0e0e0e;-webkit-text-stroke:0.18px rgba(255,255,255,0.8);transform:scaleX(0.8650);'>28 °C  (82 °F)</div>
<div class='a' style='left:145px;top:1001px;width:777px;height:27px;background:#f0f0f0;'></div>
<div class='a' style='left:102px;top:1017px;width:15px;height:1px;background:repeating-linear-gradient(to right,#5a5a5a 0 1.5px,transparent 1.5px 3px)'></div>
<div class='t' style='left:149.00px;top:1004.25px;font-size:19px;line-height:19px;color:#0e0e0e;-webkit-text-stroke:0.18px rgba(255,255,255,0.8);transform:scaleX(0.9000);'>Core #25</div>
<div class='t' style='left:357.00px;top:1004.25px;font-size:19px;line-height:19px;color:#0e0e0e;-webkit-text-stroke:0.18px rgba(255,255,255,0.8);transform:scaleX(0.8650);'>16 °C  (60 °F)</div>
<div class='t' style='left:488.00px;top:1004.25px;font-size:19px;line-height:19px;color:#0e0e0e;-webkit-text-stroke:0.18px rgba(255,255,255,0.8);transform:scaleX(0.8650);'>16 °C  (60 °F)</div>
<div class='t' style='left:618.00px;top:1004.25px;font-size:19px;line-height:19px;color:#0e0e0e;-webkit-text-stroke:0.18px rgba(255,255,255,0.8);transform:scaleX(0.8650);'>21 °C  (69 °F)</div>
<div class='a' style='left:102px;top:1044px;width:15px;height:1px;background:repeating-linear-gradient(to right,#5a5a5a 0 1.5px,transparent 1.5px 3px)'></div>
<div class='t' style='left:149.00px;top:1031.25px;font-size:19px;line-height:19px;color:#0e0e0e;-webkit-text-stroke:0.18px rgba(255,255,255,0.8);transform:scaleX(0.9000);'>Core #26</div>
<div class='t' style='left:357.00px;top:1031.25px;font-size:19px;line-height:19px;color:#0e0e0e;-webkit-text-stroke:0.18px rgba(255,255,255,0.8);transform:scaleX(0.8650);'>15 °C  (59 °F)</div>
<div class='t' style='left:488.00px;top:1031.25px;font-size:19px;line-height:19px;color:#0e0e0e;-webkit-text-stroke:0.18px rgba(255,255,255,0.8);transform:scaleX(0.8650);'>15 °C  (59 °F)</div>
<div class='t' style='left:618.00px;top:1031.25px;font-size:19px;line-height:19px;color:#0e0e0e;-webkit-text-stroke:0.18px rgba(255,255,255,0.8);transform:scaleX(0.8650);'>26 °C  (78 °F)</div>
<div class='a' style='left:145px;top:1055px;width:777px;height:27px;background:#f0f0f0;'></div>
<div class='a' style='left:102px;top:1071px;width:15px;height:1px;background:repeating-linear-gradient(to right,#5a5a5a 0 1.5px,transparent 1.5px 3px)'></div>
<div class='t' style='left:149.00px;top:1058.25px;font-size:19px;line-height:19px;color:#0e0e0e;-webkit-text-stroke:0.18px rgba(255,255,255,0.8);transform:scaleX(0.9000);'>Core #27</div>
<div class='t' style='left:357.00px;top:1058.25px;font-size:19px;line-height:19px;color:#0e0e0e;-webkit-text-stroke:0.18px rgba(255,255,255,0.8);transform:scaleX(0.8650);'>18 °C  (64 °F)</div>
<div class='t' style='left:488.00px;top:1058.25px;font-size:19px;line-height:19px;color:#0e0e0e;-webkit-text-stroke:0.18px rgba(255,255,255,0.8);transform:scaleX(0.8650);'>17 °C  (62 °F)</div>
<div class='t' style='left:618.00px;top:1058.25px;font-size:19px;line-height:19px;color:#0e0e0e;-webkit-text-stroke:0.18px rgba(255,255,255,0.8);transform:scaleX(0.8650);'>27 °C  (80 °F)</div>
<div class='a' style='left:79px;top:1097px;width:10px;height:1px;background:repeating-linear-gradient(to right,#5a5a5a 0 1.5px,transparent 1.5px 3px)'></div>
<div class='a' style='left:65.5px;top:1090.5px;width:13.5px;height:13.5px;border:1.5px solid #707070;box-sizing:border-box;background:#fff'></div>
<div class='a' style='left:68.5px;top:1096.2px;width:7.5px;height:1.8px;background:#111'></div>
<svg class='a' style='left:89px;top:1084px' width='22' height='22' viewBox='0 0 22 22'>
        <defs><radialGradient id='pg' cx='0.35' cy='0.35' r='0.7'><stop offset='0' stop-color='#f04040'/><stop offset='0.6' stop-color='#c01010'/><stop offset='1' stop-color='#700000'/></radialGradient></defs>
        <circle cx='9.5' cy='12' r='9.5' fill='url(#pg)'/>
        <path d='M15 1 L20 4 L15 10 L18 11 L8 20 L11 13 L8 12 Z' fill='#f0b020' stroke='#c07000' stroke-width='0.6'/></svg>
<div class='t' style='left:120.80px;top:1085.25px;font-size:19px;line-height:19px;color:#0e0e0e;-webkit-text-stroke:0.18px rgba(255,255,255,0.8);transform:scaleX(0.8890);'>Powers</div>
<div class='a' style='left:145px;top:1109px;width:777px;height:27px;background:#f0f0f0;'></div>
<div class='a' style='left:102px;top:1125px;width:15px;height:1px;background:repeating-linear-gradient(to right,#5a5a5a 0 1.5px,transparent 1.5px 3px)'></div>
<div class='t' style='left:149.00px;top:1112.25px;font-size:19px;line-height:19px;color:#0e0e0e;-webkit-text-stroke:0.18px rgba(255,255,255,0.8);transform:scaleX(0.8900);'>Package</div>
<div class='t' style='left:357.00px;top:1112.25px;font-size:19px;line-height:19px;color:#0e0e0e;-webkit-text-stroke:0.18px rgba(255,255,255,0.8);transform:scaleX(0.8500);'>7.18 W</div>
<div class='t' style='left:488.00px;top:1112.25px;font-size:19px;line-height:19px;color:#0e0e0e;-webkit-text-stroke:0.18px rgba(255,255,255,0.8);transform:scaleX(0.8500);'>6.38 W</div>
<div class='t' style='left:618.00px;top:1112.25px;font-size:19px;line-height:19px;color:#0e0e0e;-webkit-text-stroke:0.18px rgba(255,255,255,0.8);transform:scaleX(0.8500);'>39.04 W</div>
<div class='a' style='left:79px;top:1151px;width:10px;height:1px;background:repeating-linear-gradient(to right,#5a5a5a 0 1.5px,transparent 1.5px 3px)'></div>
<div class='a' style='left:65.5px;top:1144.5px;width:13.5px;height:13.5px;border:1.5px solid #707070;box-sizing:border-box;background:#fff'></div>
<div class='a' style='left:68.5px;top:1150.2px;width:7.5px;height:1.8px;background:#111'></div>
<div class='a' style='left:71.2px;top:1147.5px;width:1.8px;height:7.5px;background:#111'></div>
<svg class='a' style='left:90px;top:1142px' width='21' height='17' viewBox='0 0 21 17'>
        <defs><linearGradient id='ug' x1='0' y1='0' x2='0' y2='1'><stop offset='0' stop-color='#1a4a20'/><stop offset='1' stop-color='#031005'/></linearGradient></defs>
        <rect width='21' height='17' fill='url(#ug)'/>
        <path d='M1 12 L3 7 L5 11 L7 5 L9 12 L11 6 L13 10 L15 4 L17 11 L20 7' stroke='#40c040' stroke-width='1.2' fill='none' opacity='0.8'/></svg>
<div class='t' style='left:120.80px;top:1139.25px;font-size:19px;line-height:19px;color:#0e0e0e;-webkit-text-stroke:0.18px rgba(255,255,255,0.8);transform:scaleX(0.9500);'>Utilization</div>
<div class='a' style='left:0px;top:1159px;width:951px;height:31px;background:#f0f0f0;'></div>
<div class='t' style='left:3.70px;top:1168.28px;font-size:18.5px;line-height:18.5px;color:#0e0e0e;-webkit-text-stroke:0.18px rgba(255,255,255,0.8);transform:scaleX(0.8825);'>Ready</div>
<div class='a' style='left:773px;top:1164px;width:41px;height:25px;border-top:1px solid #a0a0a0;border-left:1px solid #a0a0a0;box-sizing:border-box'></div>
<div class='a' style='left:819px;top:1164px;width:49px;height:25px;border-top:1px solid #a0a0a0;border-left:1px solid #a0a0a0;box-sizing:border-box'></div>
<div class='a' style='left:873px;top:1164px;width:48px;height:25px;border-top:1px solid #a0a0a0;border-left:1px solid #a0a0a0;box-sizing:border-box'></div>
<div class='t' style='left:822.70px;top:1168.28px;font-size:18.5px;line-height:18.5px;color:#0e0e0e;-webkit-text-stroke:0.18px rgba(255,255,255,0.8);transform:scaleX(0.9611);'>NUM</div>
<svg class='a' style='left:930px;top:1170px' width='20' height='20' viewBox='0 0 20 20'><path d='M19 4 L4 19 M19 9 L9 19 M19 14 L14 19' stroke='#b8b8b8' stroke-width='1.5'/></svg>
<div class='a' style='left:0px;top:1190px;width:952px;height:5px;background:#000;'></div>
<div class='a' style='left:0;top:1190px;width:952px;height:5px;overflow:hidden'><div style='position:absolute;left:67px;top:-2px;font-family:"Liberation Sans";font-size:20px;line-height:20px;color:#fff;transform:scaleX(0.9);transform-origin:0 0'>HandBrake</div></div>
<div class='a' style='left:952px;top:0px;width:1130px;height:1195px;background:#f0f0f0;'></div>
<div class='a' style='left:952px;top:2px;width:1130px;height:44px;background:#ffffff;'></div>
<div class='a' style='left:952px;top:0;width:1130px;height:2px;background:linear-gradient(to right,#000 0,#000 60%,#7a1010 70%,#a02020 85%,#200000 92%,#000 100%)'></div>
<div class='a' style='left:952px;top:46px;width:10px;height:1144px;background:linear-gradient(to right,#c9c9c9,#eeeeee)'></div>
<div class='a' style='left:2071px;top:46px;width:11px;height:1144px;background:linear-gradient(to right,#f0f0f0,#d0d0d0)'></div>
<div class='a' style='left:2082px;top:0px;width:1px;height:1192px;background:#8c8c8c;'></div>
<svg class='a' style='left:963px;top:11px' width='22' height='25' viewBox='0 0 22 25'>
      <defs><linearGradient id='fl' x1='0' y1='0' x2='0' y2='1'><stop offset='0' stop-color='#f0a030'/><stop offset='0.45' stop-color='#e8600c'/><stop offset='0.75' stop-color='#f5a010'/><stop offset='1' stop-color='#fff000'/></linearGradient></defs>
      <path d='M5.4 1 L9.8 8.8 L14.2 5.3 L15.6 10.2 L19.6 7.6 C19.4 12 18.6 16 16.5 19 C14 22 11 23 8.5 22.6 C5.5 22 3.2 20.5 1 17.8 L3.8 16.2 L1 12.6 L4.6 12 Z' fill='url(#fl)'/>
      <path d='M9.8 8.8 L12 14 L14.2 5.3' stroke='#d84a08' stroke-width='0.8' fill='none' opacity='0.6'/></svg>
<div class='t' style='left:990.30px;top:15.58px;font-size:18.5px;line-height:18.5px;color:#999999;transform:scaleX(0.9498);'>System Stability Test - AIDA64</div>
<div class='a' style='left:1903px;top:23px;width:15px;height:1px;background:#8a8a8a;'></div>
<div class='a' style='left:1972px;top:16px;width:15px;height:15px;border:1px solid #8a8a8a;box-sizing:border-box'></div>
<svg class='a' style='left:2042px;top:15px' width='17' height='17' viewBox='0 0 17 17'><path d='M1 1 L16 16 M16 1 L1 16' stroke='#8a8a8a' stroke-width='1.1'/></svg>
<div class='a' style='left:961px;top:59px;width:1111px;height:1076px;background:#fff;border:1px solid #dcdcdc;box-sizing:border-box'></div>
<div class='a' style='left:1016px;top:85px;width:20px;height:20px;border:1.5px solid #333;box-sizing:border-box;background:#fff'></div>
<svg class='a' style='left:1016px;top:85px' width='20' height='20' viewBox='0 0 20 20'><path d='M3.5 10.5 L7.5 14.5 L16.5 5.5' stroke='#222' stroke-width='1.8' fill='none'/></svg>
<div class='t' style='left:1041.70px;top:87.62px;font-size:17.5px;line-height:17.5px;color:#0e0e0e;-webkit-text-stroke:0.18px rgba(255,255,255,0.8);transform:scaleX(0.8993);'>Stress CPU</div>
<svg class='a' style='left:978.5px;top:87.5px' width='24' height='11' viewBox='0 0 24 11'>
        <path d='M12 0.5 L23.5 4.2 L12 8 L0.5 4.2 Z' fill='#d0e4d4' stroke='#1e3a22' stroke-width='1.3'/>
        <path d='M0.8 4.6 L12 8.4 L23.2 4.6 L23.2 5.8 L12 9.4 L0.8 5.8 Z' fill='#24402a'/>
        <path d='M3 6.5 L3 8 M6 7.5 L6 9 M9 8.5 L9 10 M15 8.5 L15 10 M18 7.5 L18 9 M21 6.5 L21 8' stroke='#a89050' stroke-width='0.9'/></svg>
<div class='a' style='left:1016px;top:116px;width:20px;height:20px;border:1.5px solid #333;box-sizing:border-box;background:#fff'></div>
<svg class='a' style='left:1016px;top:116px' width='20' height='20' viewBox='0 0 20 20'><path d='M3.5 10.5 L7.5 14.5 L16.5 5.5' stroke='#222' stroke-width='1.8' fill='none'/></svg>
<div class='t' style='left:1041.70px;top:118.25px;font-size:17.5px;line-height:17.5px;color:#0e0e0e;-webkit-text-stroke:0.18px rgba(255,255,255,0.8);transform:scaleX(0.8998);'>Stress FPU</div>
<div class='t' style='left:981.00px;top:108.15px;font-size:13px;line-height:13px;color:#111;-webkit-text-stroke:0.18px rgba(255,255,255,0.8);transform:scaleX(0.8616);'>123</div>
<svg class='a' style='left:978.5px;top:120.8px' width='24' height='11' viewBox='0 0 24 11'>
        <path d='M12 0.5 L23.5 4.2 L12 8 L0.5 4.2 Z' fill='#d0e4d4' stroke='#1e3a22' stroke-width='1.3'/>
        <path d='M0.8 4.6 L12 8.4 L23.2 4.6 L23.2 5.8 L12 9.4 L0.8 5.8 Z' fill='#24402a'/>
        <path d='M3 6.5 L3 8 M6 7.5 L6 9 M9 8.5 L9 10 M15 8.5 L15 10 M18 7.5 L18 9 M21 6.5 L21 8' stroke='#a89050' stroke-width='0.9'/></svg>
<div class='a' style='left:1016px;top:146px;width:20px;height:20px;border:1.5px solid #333;box-sizing:border-box;background:#fff'></div>
<svg class='a' style='left:1016px;top:146px' width='20' height='20' viewBox='0 0 20 20'><path d='M3.5 10.5 L7.5 14.5 L16.5 5.5' stroke='#222' stroke-width='1.8' fill='none'/></svg>
<div class='t' style='left:1041.70px;top:148.87px;font-size:17.5px;line-height:17.5px;color:#0e0e0e;-webkit-text-stroke:0.18px rgba(255,255,255,0.8);transform:scaleX(0.9273);'>Stress cache</div>
<svg class='a' style='left:979px;top:148px' width='24' height='16' viewBox='0 0 24 16'>
        <path d='M1 7 L16 2 L23 5 L8 10 Z' fill='#5a5a5a'/><path d='M1 7 L8 10 L8 12 L1 9 Z' fill='#2a2a2a'/><path d='M8 10 L23 5 L23 7 L8 12 Z' fill='#404040'/>
        <path d='M3 9 L3 12 M10 12 L10 15 M13 11 L13 14 M16 10 L16 13 M19 9 L19 12 M22 8 L22 11' stroke='#8a8a8a' stroke-width='0.9'/></svg>
<div class='a' style='left:1016px;top:177px;width:20px;height:20px;border:1.5px solid #333;box-sizing:border-box;background:#fff'></div>
<div class='t' style='left:1041.70px;top:179.49px;font-size:17.5px;line-height:17.5px;color:#0e0e0e;-webkit-text-stroke:0.18px rgba(255,255,255,0.8);'>Stress system memory</div>
<svg class='a' style='left:979px;top:177.06px' width='24' height='14' viewBox='0 0 24 14'>
        <rect x='0' y='0' width='24' height='14' fill='#2a8a5a'/>
        <rect x='2' y='2' width='9' height='7' fill='#2a3a3a'/><rect x='13' y='2' width='9' height='7' fill='#2a3a3a'/>
        <rect x='2' y='10' width='9' height='3' fill='#d8a040'/><rect x='13' y='10' width='9' height='3' fill='#d8a040'/></svg>
<div class='a' style='left:1016px;top:208px;width:20px;height:20px;border:1.5px solid #333;box-sizing:border-box;background:#fff'></div>
<div class='t' style='left:1041.70px;top:210.11px;font-size:17.5px;line-height:17.5px;color:#0e0e0e;-webkit-text-stroke:0.18px rgba(255,255,255,0.8);transform:scaleX(0.9616);'>Stress local disks</div>
<svg class='a' style='left:979px;top:213.68px' width='24' height='12' viewBox='0 0 24 12'>
        <path d='M1 5 L6 1 L23 1 L23 6 L18 11 L1 11 Z' fill='#d8d8d8'/><path d='M1 5 L17 5 L17 11 L1 11 Z' fill='#4a4a4a'/>
        <path d='M17 5 L23 1 L23 6 L17 11 Z' fill='#b0b0b0'/></svg>
<div class='a' style='left:1016px;top:238px;width:20px;height:20px;border:1.5px solid #333;box-sizing:border-box;background:#fff'></div>
<svg class='a' style='left:1016px;top:238px' width='20' height='20' viewBox='0 0 20 20'><path d='M3.5 10.5 L7.5 14.5 L16.5 5.5' stroke='#222' stroke-width='1.8' fill='none'/></svg>
<div class='t' style='left:1041.70px;top:240.73px;font-size:17.5px;line-height:17.5px;color:#0e0e0e;-webkit-text-stroke:0.18px rgba(255,255,255,0.8);transform:scaleX(0.8954);'>Stress GPU(s)</div>
<svg class='a' style='left:982px;top:236.3px' width='22' height='23' viewBox='0 0 22 23'>
        <path d='M1 0 L15 4 L15 11 L1 10 Z' fill='#3aa0e8' stroke='#2070b0' stroke-width='0.6'/>
        <rect x='6' y='12' width='13' height='9' fill='#2a8a3a'/><rect x='8' y='21' width='8' height='2' fill='#d8b040'/>
        <rect x='10' y='14' width='4' height='4' fill='#1a3a2a'/><path d='M19 10 L19 22' stroke='#888' stroke-width='1'/></svg>
<div class='a' style='left:1232px;top:82px;width:704px;height:184px;border:1px solid #828282;box-sizing:border-box;background:#fff'></div>
<div class='a' style='left:1233px;top:143px;width:702px;height:1px;background:#efefef;'></div>
<div class='a' style='left:1233px;top:172px;width:702px;height:1px;background:#efefef;'></div>
<div class='a' style='left:1233px;top:201px;width:702px;height:1px;background:#efefef;'></div>
<div class='a' style='left:1233px;top:230px;width:702px;height:1px;background:#efefef;'></div>
<div class='a' style='left:1233px;top:259px;width:702px;height:1px;background:#efefef;'></div>
<div class='a' style='left:1464px;top:83px;width:1px;height:182px;background:#ececec;'></div>
<div class='a' style='left:1904px;top:83px;width:1px;height:182px;background:#ececec;'></div>
<div class='a' style='left:1464px;top:83px;width:1px;height:30px;background:#e0e0e0;'></div>
<div class='a' style='left:1904px;top:83px;width:1px;height:30px;background:#e0e0e0;'></div>
<div class='t' style='left:1241.40px;top:93.12px;font-size:17.5px;line-height:17.5px;color:#0e0e0e;-webkit-text-stroke:0.18px rgba(255,255,255,0.8);transform:scaleX(1.0073);'>Date &amp; Time</div>
<div class='t' style='left:1471.40px;top:93.12px;font-size:17.5px;line-height:17.5px;color:#0e0e0e;-webkit-text-stroke:0.18px rgba(255,255,255,0.8);transform:scaleX(0.9431);'>Status</div>
<div class='a' style='left:986px;top:307px;width:1064px;height:378px;border:1px solid #d9d9d9;border-right:none;box-sizing:border-box;background:#fff'></div>
<div class='a' style='left:986px;top:276px;width:122px;height:33px;background:#fff;border:1px solid #d9d9d9;border-bottom:none;box-sizing:border-box'></div>
<div class='t' style='left:995.00px;top:284.32px;font-size:17.5px;line-height:17.5px;color:#0e0e0e;-webkit-text-stroke:0.18px rgba(255,255,255,0.8);transform:scaleX(0.9794);'>Temperatures</div>
<div class='a' style='left:1108px;top:277px;width:112px;height:31px;background:#f0f0f0;border:1px solid #d9d9d9;box-sizing:border-box'></div>
<div class='t' style='left:1112.20px;top:286.32px;font-size:17.5px;line-height:17.5px;color:#0e0e0e;-webkit-text-stroke:0.18px rgba(255,255,255,0.8);transform:scaleX(0.9862);'>Cooling Fans</div>
<div class='a' style='left:1219px;top:277px;width:82px;height:31px;background:#f0f0f0;border:1px solid #d9d9d9;box-sizing:border-box'></div>
<div class='t' style='left:1225.80px;top:286.32px;font-size:17.5px;line-height:17.5px;color:#0e0e0e;-webkit-text-stroke:0.18px rgba(255,255,255,0.8);transform:scaleX(1.0128);'>Voltages</div>
<div class='a' style='left:1300px;top:277px;width:79px;height:31px;background:#f0f0f0;border:1px solid #d9d9d9;box-sizing:border-box'></div>
<div class='t' style='left:1306.30px;top:286.32px;font-size:17.5px;line-height:17.5px;color:#0e0e0e;-webkit-text-stroke:0.18px rgba(255,255,255,0.8);transform:scaleX(0.9715);'>Currents</div>
<div class='a' style='left:1378px;top:277px;width:73px;height:31px;background:#f0f0f0;border:1px solid #d9d9d9;box-sizing:border-box'></div>
<div class='t' style='left:1384.70px;top:286.32px;font-size:17.5px;line-height:17.5px;color:#0e0e0e;-webkit-text-stroke:0.18px rgba(255,255,255,0.8);transform:scaleX(0.9322);'>Powers</div>
<div class='a' style='left:1450px;top:277px;width:72px;height:31px;background:#f0f0f0;border:1px solid #d9d9d9;box-sizing:border-box'></div>
<div class='t' style='left:1456.10px;top:286.32px;font-size:17.5px;line-height:17.5px;color:#0e0e0e;-webkit-text-stroke:0.18px rgba(255,255,255,0.8);transform:scaleX(0.9616);'>Clocks</div>
<div class='a' style='left:1521px;top:277px;width:74px;height:31px;background:#f0f0f0;border:1px solid #d9d9d9;box-sizing:border-box'></div>
<div class='t' style='left:1528.40px;top:286.32px;font-size:17.5px;line-height:17.5px;color:#0e0e0e;-webkit-text-stroke:0.18px rgba(255,255,255,0.8);transform:scaleX(0.9966);'>Unified</div>
<div class='a' style='left:1594px;top:277px;width:79px;height:31px;background:#f0f0f0;border:1px solid #d9d9d9;box-sizing:border-box'></div>
<div class='t' style='left:1600.60px;top:286.32px;font-size:17.5px;line-height:17.5px;color:#0e0e0e;-webkit-text-stroke:0.18px rgba(255,255,255,0.8);transform:scaleX(0.9524);'>Statistics</div>
<div class='a' style='left:988px;top:322px;width:35px;height:16px;background:#0a78d7;'></div>
<div class='a' style='left:992px;top:338px;width:27px;height:330px;background:#e6e6e6;border:1px solid #d6d6d6;border-top:none;box-sizing:border-box'></div>
<div class='a' style='left:1026px;top:311px;width:1023px;height:368px;background:#000;'></div>
<div class='a' style='left:1056px;top:324px;width:19px;height:18px;background:#fff'></div>
<div class='t' style='left:1079.60px;top:326.32px;font-size:15.5px;line-height:15.5px;color:#e6e640;transform:scaleX(1.0331);'>Motherboard</div>
<div class='a' style='left:1187px;top:324px;width:19px;height:18px;background:#fff'></div>
<svg class='a' style='left:1187px;top:323px' width='19' height='19' viewBox='0 0 20 20'><path d='M3.5 10.5 L7.5 14.5 L16.5 5.5' stroke='#333' stroke-width='1.8' fill='none'/></svg>
<div class='t' style='left:1210.00px;top:326.32px;font-size:15.5px;line-height:15.5px;color:#b8c4d4;transform:scaleX(0.9012);'>CPU</div>
<div class='a' style='left:1256px;top:324px;width:19px;height:18px;background:#fff'></div>
<div class='t' style='left:1279.10px;top:326.32px;font-size:15.5px;line-height:15.5px;color:#3cd83c;transform:scaleX(0.9459);'>CPU Core #1</div>
<div class='a' style='left:1384px;top:324px;width:19px;height:18px;background:#fff'></div>
<div class='t' style='left:1407.70px;top:326.32px;font-size:15.5px;line-height:15.5px;color:#40dcd0;transform:scaleX(0.9513);'>CPU Core #2</div>
<div class='a' style='left:1512px;top:324px;width:19px;height:18px;background:#fff'></div>
<div class='t' style='left:1535.50px;top:326.32px;font-size:15.5px;line-height:15.5px;color:#dc46dc;transform:scaleX(0.9502);'>CPU Core #3</div>
<div class='a' style='left:1640px;top:324px;width:19px;height:18px;background:#fff'></div>
<div class='t' style='left:1663.70px;top:326.32px;font-size:15.5px;line-height:15.5px;color:#ccd8c0;transform:scaleX(0.9502);'>CPU Core #4</div>
<div class='a' style='left:1768px;top:324px;width:19px;height:18px;background:#fff'></div>
<div class='t' style='left:1792.00px;top:326.32px;font-size:15.5px;line-height:15.5px;color:#f0d8a0;transform:scaleX(0.9609);'>Samsung SSD 960 PRO 512GB</div>
<div class='g' style='left:1105px;top:356px;width:1px;height:279px'></div>
<div class='g' style='left:1115px;top:356px;width:1px;height:279px'></div>
<div class='g' style='left:1125px;top:356px;width:1px;height:279px'></div>
<div class='g' style='left:1135px;top:356px;width:1px;height:279px'></div>
<div class='g' style='left:1145px;top:356px;width:1px;height:279px'></div>
<div class='g' style='left:1155px;top:356px;width:1px;height:279px'></div>
<div class='g' style='left:1165px;top:356px;width:1px;height:279px'></div>
<div class='g' style='left:1175px;top:356px;width:1px;height:279px'></div>
<div class='g' style='left:1185px;top:356px;width:1px;height:279px'></div>
<div class='g' style='left:1195px;top:356px;width:1px;height:279px'></div>
<div class='g' style='left:1205px;top:356px;width:1px;height:279px'></div>
<div class='g' style='left:1215px;top:356px;width:1px;height:279px'></div>
<div class='g' style='left:1225px;top:356px;width:1px;height:279px'></div>
<div class='g' style='left:1235px;top:356px;width:1px;height:279px'></div>
<div class='g' style='left:1245px;top:356px;width:1px;height:279px'></div>
<div class='g' style='left:1255px;top:356px;width:1px;height:279px'></div>
<div class='g' style='left:1265px;top:356px;width:1px;height:279px'></div>
<div class='g' style='left:1275px;top:356px;width:1px;height:279px'></div>
<div class='g' style='left:1285px;top:356px;width:1px;height:279px'></div>
<div class='g' style='left:1295px;top:356px;width:1px;height:279px'></div>
<div class='g' style='left:1305px;top:356px;width:1px;height:279px'></div>
<div class='g' style='left:1315px;top:356px;width:1px;height:279px'></div>
<div class='g' style='left:1325px;top:356px;width:1px;height:279px'></div>
<div class='g' style='left:1335px;top:356px;width:1px;height:279px'></div>
<div class='g' style='left:1345px;top:356px;width:1px;height:279px'></div>
<div class='g' style='left:1355px;top:356px;width:1px;height:279px'></div>
<div class='g' style='left:1365px;top:356px;width:1px;height:279px'></div>
<div class='g' style='left:1375px;top:356px;width:1px;height:279px'></div>
<div class='g' style='left:1385px;top:356px;width:1px;height:279px'></div>
<div class='g' style='left:1395px;top:356px;width:1px;height:279px'></div>
<div class='g' style='left:1405px;top:356px;width:1px;height:279px'></div>
<div class='g' style='left:1415px;top:356px;width:1px;height:279px'></div>
<div class='g' style='left:1425px;top:356px;width:1px;height:279px'></div>
<div class='g' style='left:1435px;top:356px;width:1px;height:279px'></div>
<div class='g' style='left:1445px;top:356px;width:1px;height:279px'></div>
<div class='g' style='left:1455px;top:356px;width:1px;height:279px'></div>
<div class='g' style='left:1465px;top:356px;width:1px;height:279px'></div>
<div class='g' style='left:1475px;top:356px;width:1px;height:279px'></div>
<div class='g' style='left:1485px;top:356px;width:1px;height:279px'></div>
<div class='g' style='left:1495px;top:356px;width:1px;height:279px'></div>
<div class='g' style='left:1505px;top:356px;width:1px;height:279px'></div>
<div class='g' style='left:1515px;top:356px;width:1px;height:279px'></div>
<div class='g' style='left:1525px;top:356px;width:1px;height:279px'></div>
<div class='g' style='left:1535px;top:356px;width:1px;height:279px'></div>
<div class='g' style='left:1545px;top:356px;width:1px;height:279px'></div>
<div class='g' style='left:1555px;top:356px;width:1px;height:279px'></div>
<div class='g' style='left:1565px;top:356px;width:1px;height:279px'></div>
<div class='g' style='left:1575px;top:356px;width:1px;height:279px'></div>
<div class='g' style='left:1585px;top:356px;width:1px;height:279px'></div>
<div class='g' style='left:1595px;top:356px;width:1px;height:279px'></div>
<div class='g' style='left:1605px;top:356px;width:1px;height:279px'></div>
<div class='g' style='left:1615px;top:356px;width:1px;height:279px'></div>
<div class='g' style='left:1625px;top:356px;width:1px;height:279px'></div>
<div class='g' style='left:1635px;top:356px;width:1px;height:279px'></div>
<div class='g' style='left:1645px;top:356px;width:1px;height:279px'></div>
<div class='g' style='left:1655px;top:356px;width:1px;height:279px'></div>
<div class='g' style='left:1665px;top:356px;width:1px;height:279px'></div>
<div class='g' style='left:1675px;top:356px;width:1px;height:279px'></div>
<div class='g' style='left:1685px;top:356px;width:1px;height:279px'></div>
<div class='g' style='left:1695px;top:356px;width:1px;height:279px'></div>
<div class='g' style='left:1705px;top:356px;width:1px;height:279px'></div>
<div class='g' style='left:1715px;top:356px;width:1px;height:279px'></div>
<div class='g' style='left:1725px;top:356px;width:1px;height:279px'></div>
<div class='g' style='left:1735px;top:356px;width:1px;height:279px'></div>
<div class='g' style='left:1745px;top:356px;width:1px;height:279px'></div>
<div class='g' style='left:1755px;top:356px;width:1px;height:279px'></div>
<div class='g' style='left:1765px;top:356px;width:1px;height:279px'></div>
<div class='g' style='left:1775px;top:356px;width:1px;height:279px'></div>
<div class='g' style='left:1785px;top:356px;width:1px;height:279px'></div>
<div class='g' style='left:1795px;top:356px;width:1px;height:279px'></div>
<div class='g' style='left:1805px;top:356px;width:1px;height:279px'></div>
<div class='g' style='left:1815px;top:356px;width:1px;height:279px'></div>
<div class='g' style='left:1825px;top:356px;width:1px;height:279px'></div>
<div class='g' style='left:1835px;top:356px;width:1px;height:279px'></div>
<div class='g' style='left:1845px;top:356px;width:1px;height:279px'></div>
<div class='g' style='left:1855px;top:356px;width:1px;height:279px'></div>
<div class='g' style='left:1865px;top:356px;width:1px;height:279px'></div>
<div class='g' style='left:1875px;top:356px;width:1px;height:279px'></div>
<div class='g' style='left:1885px;top:356px;width:1px;height:279px'></div>
<div class='g' style='left:1895px;top:356px;width:1px;height:279px'></div>
<div class='g' style='left:1905px;top:356px;width:1px;height:279px'></div>
<div class='g' style='left:1915px;top:356px;width:1px;height:279px'></div>
<div class='g' style='left:1925px;top:356px;width:1px;height:279px'></div>
<div class='g' style='left:1935px;top:356px;width:1px;height:279px'></div>
<div class='g' style='left:1945px;top:356px;width:1px;height:279px'></div>
<div class='g' style='left:1955px;top:356px;width:1px;height:279px'></div>
<div class='g' style='left:1965px;top:356px;width:1px;height:279px'></div>
<div class='h' style='left:1101px;top:364px;width:873px;height:1px'></div>
<div class='h' style='left:1101px;top:391px;width:873px;height:1px'></div>
<div class='h' style='left:1101px;top:418px;width:873px;height:1px'></div>
<div class='h' style='left:1101px;top:445px;width:873px;height:1px'></div>
<div class='h' style='left:1101px;top:472px;width:873px;height:1px'></div>
<div class='h' style='left:1101px;top:499px;width:873px;height:1px'></div>
<div class='h' style='left:1101px;top:526px;width:873px;height:1px'></div>
<div class='h' style='left:1101px;top:553px;width:873px;height:1px'></div>
<div class='h' style='left:1101px;top:580px;width:873px;height:1px'></div>
<div class='h' style='left:1101px;top:607px;width:873px;height:1px'></div>
<div class='h' style='left:1101px;top:634px;width:873px;height:1px'></div>
<div class='t' style='left:1051.70px;top:349.82px;font-size:15.5px;line-height:15.5px;color:#fff;transform:scaleX(0.9391);'>100</div>
<div class='t' style='left:1085.60px;top:349.82px;font-size:15.5px;line-height:15.5px;color:#fff;transform:scaleX(0.8212);'>C</div>
<div class='a' style='left:1080px;top:346px;width:6px;height:6px;border:1.3px solid #fff;border-radius:50%;box-sizing:border-box'></div>
<div class='t' style='left:1068.50px;top:627.33px;font-size:15.5px;line-height:15.5px;color:#fff;transform:scaleX(0.8696);'>0</div>
<div class='t' style='left:1085.50px;top:627.33px;font-size:15.5px;line-height:15.5px;color:#fff;transform:scaleX(0.8212);'>C</div>
<div class='a' style='left:1080px;top:624px;width:6px;height:6px;border:1.3px solid #fff;border-radius:50%;box-sizing:border-box'></div>
<div class='t' style='left:1979.00px;top:552.53px;font-size:15.5px;line-height:15.5px;color:#dedede;transform:scaleX(0.9275);'>27</div>
<svg class='a' style='left:1026px;top:311px' width='1023' height='368' viewBox='1026 311 1023 368'><polyline points='1942,533 1943,550 1944.5,552 1944.5,557.5 1948,557.5 1950.5,562 1952.5,559.5 1955,559.5 1957,559.5 1959,562 1962,562 1964,559.5 1966,559.5' fill='none' stroke='#e8e8e8' stroke-width='1.2'/></svg>
<div class='a' style='left:986px;top:685px;width:1063px;height:368px;background:#000;'></div>
<div class='t' style='left:1418.60px;top:700.62px;font-size:15.5px;line-height:15.5px;color:#e6e640;transform:scaleX(0.9286);'>CPU Usage</div>
<div class='a' style='left:1504.5px;top:701px;width:1.5px;height:16.5px;background:#d8d8d8;'></div>
<div class='t' style='left:1515.50px;top:700.62px;font-size:15.5px;line-height:15.5px;color:#2ad82a;transform:scaleX(0.9933);'>CPU Throttling</div>
<div class='g' style='left:1063px;top:730px;width:1px;height:279px'></div>
<div class='g' style='left:1073px;top:730px;width:1px;height:279px'></div>
<div class='g' style='left:1083px;top:730px;width:1px;height:279px'></div>
<div class='g' style='left:1093px;top:730px;width:1px;height:279px'></div>
<div class='g' style='left:1103px;top:730px;width:1px;height:279px'></div>
<div class='g' style='left:1113px;top:730px;width:1px;height:279px'></div>
<div class='g' style='left:1123px;top:730px;width:1px;height:279px'></div>
<div class='g' style='left:1133px;top:730px;width:1px;height:279px'></div>
<div class='g' style='left:1143px;top:730px;width:1px;height:279px'></div>
<div class='g' style='left:1153px;top:730px;width:1px;height:279px'></div>
<div class='g' style='left:1163px;top:730px;width:1px;height:279px'></div>
<div class='g' style='left:1173px;top:730px;width:1px;height:279px'></div>
<div class='g' style='left:1183px;top:730px;width:1px;height:279px'></div>
<div class='g' style='left:1193px;top:730px;width:1px;height:279px'></div>
<div class='g' style='left:1203px;top:730px;width:1px;height:279px'></div>
<div class='g' style='left:1213px;top:730px;width:1px;height:279px'></div>
<div class='g' style='left:1223px;top:730px;width:1px;height:279px'></div>
<div class='g' style='left:1233px;top:730px;width:1px;height:279px'></div>
<div class='g' style='left:1243px;top:730px;width:1px;height:279px'></div>
<div class='g' style='left:1253px;top:730px;width:1px;height:279px'></div>
<div class='g' style='left:1263px;top:730px;width:1px;height:279px'></div>
<div class='g' style='left:1273px;top:730px;width:1px;height:279px'></div>
<div class='g' style='left:1283px;top:730px;width:1px;height:279px'></div>
<div class='g' style='left:1293px;top:730px;width:1px;height:279px'></div>
<div class='g' style='left:1303px;top:730px;width:1px;height:279px'></div>
<div class='g' style='left:1313px;top:730px;width:1px;height:279px'></div>
<div class='g' style='left:1323px;top:730px;width:1px;height:279px'></div>
<div class='g' style='left:1333px;top:730px;width:1px;height:279px'></div>
<div class='g' style='left:1343px;top:730px;width:1px;height:279px'></div>
<div class='g' style='left:1353px;top:730px;width:1px;height:279px'></div>
<div class='g' style='left:1363px;top:730px;width:1px;height:279px'></div>
<div class='g' style='left:1373px;top:730px;width:1px;height:279px'></div>
<div class='g' style='left:1383px;top:730px;width:1px;height:279px'></div>
<div class='g' style='left:1393px;top:730px;width:1px;height:279px'></div>
<div class='g' style='left:1403px;top:730px;width:1px;height:279px'></div>
<div class='g' style='left:1413px;top:730px;width:1px;height:279px'></div>
<div class='g' style='left:1423px;top:730px;width:1px;height:279px'></div>
<div class='g' style='left:1433px;top:730px;width:1px;height:279px'></div>
<div class='g' style='left:1443px;top:730px;width:1px;height:279px'></div>
<div class='g' style='left:1453px;top:730px;width:1px;height:279px'></div>
<div class='g' style='left:1463px;top:730px;width:1px;height:279px'></div>
<div class='g' style='left:1473px;top:730px;width:1px;height:279px'></div>
<div class='g' style='left:1483px;top:730px;width:1px;height:279px'></div>
<div class='g' style='left:1493px;top:730px;width:1px;height:279px'></div>
<div class='g' style='left:1503px;top:730px;width:1px;height:279px'></div>
<div class='g' style='left:1513px;top:730px;width:1px;height:279px'></div>
<div class='g' style='left:1523px;top:730px;width:1px;height:279px'></div>
<div class='g' style='left:1533px;top:730px;width:1px;height:279px'></div>
<div class='g' style='left:1543px;top:730px;width:1px;height:279px'></div>
<div class='g' style='left:1553px;top:730px;width:1px;height:279px'></div>
<div class='g' style='left:1563px;top:730px;width:1px;height:279px'></div>
<div class='g' style='left:1573px;top:730px;width:1px;height:279px'></div>
<div class='g' style='left:1583px;top:730px;width:1px;height:279px'></div>
<div class='g' style='left:1593px;top:730px;width:1px;height:279px'></div>
<div class='g' style='left:1603px;top:730px;width:1px;height:279px'></div>
<div class='g' style='left:1613px;top:730px;width:1px;height:279px'></div>
<div class='g' style='left:1623px;top:730px;width:1px;height:279px'></div>
<div class='g' style='left:1633px;top:730px;width:1px;height:279px'></div>
<div class='g' style='left:1643px;top:730px;width:1px;height:279px'></div>
<div class='g' style='left:1653px;top:730px;width:1px;height:279px'></div>
<div class='g' style='left:1663px;top:730px;width:1px;height:279px'></div>
<div class='g' style='left:1673px;top:730px;width:1px;height:279px'></div>
<div class='g' style='left:1683px;top:730px;width:1px;height:279px'></div>
<div class='g' style='left:1693px;top:730px;width:1px;height:279px'></div>
<div class='g' style='left:1703px;top:730px;width:1px;height:279px'></div>
<div class='g' style='left:1713px;top:730px;width:1px;height:279px'></div>
<div class='g' style='left:1723px;top:730px;width:1px;height:279px'></div>
<div class='g' style='left:1733px;top:730px;width:1px;height:279px'></div>
<div class='g' style='left:1743px;top:730px;width:1px;height:279px'></div>
<div class='g' style='left:1753px;top:730px;width:1px;height:279px'></div>
<div class='g' style='left:1763px;top:730px;width:1px;height:279px'></div>
<div class='g' style='left:1773px;top:730px;width:1px;height:279px'></div>
<div class='g' style='left:1783px;top:730px;width:1px;height:279px'></div>
<div class='g' style='left:1793px;top:730px;width:1px;height:279px'></div>
<div class='g' style='left:1803px;top:730px;width:1px;height:279px'></div>
<div class='g' style='left:1813px;top:730px;width:1px;height:279px'></div>
<div class='g' style='left:1823px;top:730px;width:1px;height:279px'></div>
<div class='g' style='left:1833px;top:730px;width:1px;height:279px'></div>
<div class='g' style='left:1843px;top:730px;width:1px;height:279px'></div>
<div class='g' style='left:1853px;top:730px;width:1px;height:279px'></div>
<div class='g' style='left:1863px;top:730px;width:1px;height:279px'></div>
<div class='g' style='left:1873px;top:730px;width:1px;height:279px'></div>
<div class='g' style='left:1883px;top:730px;width:1px;height:279px'></div>
<div class='g' style='left:1893px;top:730px;width:1px;height:279px'></div>
<div class='g' style='left:1903px;top:730px;width:1px;height:279px'></div>
<div class='g' style='left:1913px;top:730px;width:1px;height:279px'></div>
<div class='g' style='left:1923px;top:730px;width:1px;height:279px'></div>
<div class='g' style='left:1933px;top:730px;width:1px;height:279px'></div>
<div class='g' style='left:1943px;top:730px;width:1px;height:279px'></div>
<div class='g' style='left:1953px;top:730px;width:1px;height:279px'></div>
<div class='g' style='left:1963px;top:730px;width:1px;height:279px'></div>
<div class='g' style='left:1973px;top:730px;width:1px;height:279px'></div>
<div class='h' style='left:1061px;top:738px;width:912px;height:1px'></div>
<div class='h' style='left:1061px;top:765px;width:912px;height:1px'></div>
<div class='h' style='left:1061px;top:792px;width:912px;height:1px'></div>
<div class='h' style='left:1061px;top:819px;width:912px;height:1px'></div>
<div class='h' style='left:1061px;top:846px;width:912px;height:1px'></div>
<div class='h' style='left:1061px;top:873px;width:912px;height:1px'></div>
<div class='h' style='left:1061px;top:900px;width:912px;height:1px'></div>
<div class='h' style='left:1061px;top:927px;width:912px;height:1px'></div>
<div class='h' style='left:1061px;top:954px;width:912px;height:1px'></div>
<div class='h' style='left:1061px;top:981px;width:912px;height:1px'></div>
<div class='h' style='left:1061px;top:1008px;width:912px;height:1px'></div>
<div class='t' style='left:1016.50px;top:723.83px;font-size:15.5px;line-height:15.5px;color:#fff;transform:scaleX(0.9658);'>100%</div>
<div class='t' style='left:1033.70px;top:1001.62px;font-size:15.5px;line-height:15.5px;color:#fff;transform:scaleX(0.9328);'>0%</div>
<div class='t' style='left:1978.90px;top:1001.33px;font-size:15.5px;line-height:15.5px;color:#e6e640;transform:scaleX(0.9149);'>0%</div>
<div class='t' style='left:2003.50px;top:1001.33px;font-size:15.5px;line-height:15.5px;color:#2ad82a;transform:scaleX(0.9372);'>0%</div>
<svg class='a' style='left:986px;top:685px' width='1063' height='368' viewBox='986 685 1063 368'><polyline points='1841.0,1000.2 1844.4,1006.6 1848.0,1006.6 1850.7,1005.7 1852.6,1007.5 1856.3,1002.9 1859.1,1000.2 1861.0,1002.9 1864.3,1002.9 1865.7,1005.7 1868.4,1002.9 1870.3,1006.6 1874.0,1006.6 1876.4,1000.2 1878.7,1007.5 1884.3,1007.5 1886.2,1003.3 1888.5,1007.5 1890.8,1006.6 1893.1,1007.5 1899.7,1007.5 1901.1,1006.1 1902.5,1007.5 1907.6,1007.5 1909.0,1006.1 1910.4,1007.5 1915.5,1007.5 1916.9,1006.1 1918.3,1007.5 1923.9,1007.5 1926.2,1000.2 1928.5,1007.5 1931.3,1007.5 1934.1,1000.2 1936.9,1007.5 1941.1,1007.5 1943.0,1006.1 1944.8,1007.5 1949.5,1007.5 1950.9,1006.1 1952.3,1007.5 1956.0,1007.5 1958.8,1003.0 1961.2,1007.1 1962.6,1007.5 1965.3,1007.1 1967.2,1005.7 1968.1,1007.5' fill='none' stroke='#f0f040' stroke-width='1'/><line x1='1841' y1='1008.5' x2='1972' y2='1008.5' stroke='#50e050' stroke-width='1.3'/></svg>
<div class='t' style='left:987.00px;top:1088.12px;font-size:17.5px;line-height:17.5px;color:#0e0e0e;-webkit-text-stroke:0.18px rgba(255,255,255,0.8);transform:scaleX(0.9783);'>Remaining Battery:</div>
<div class='a' style='left:1151px;top:1076px;width:123px;height:37px;background:#000;'></div>
<div class='t' style='left:1171.00px;top:1088.12px;font-size:17.5px;line-height:17.5px;color:#22dd22;transform:scaleX(1.0392);'>No battery</div>
<div class='t' style='left:1316.00px;top:1088.12px;font-size:17.5px;line-height:17.5px;color:#0e0e0e;-webkit-text-stroke:0.18px rgba(255,255,255,0.8);transform:scaleX(0.9598);'>Test Started:</div>
<div class='a' style='left:1429px;top:1076px;width:215px;height:37px;background:#000;'></div>
<div class='t' style='left:1688.20px;top:1088.12px;font-size:17.5px;line-height:17.5px;color:#0e0e0e;-webkit-text-stroke:0.18px rgba(255,255,255,0.8);transform:scaleX(0.9595);'>Elapsed Time:</div>
<div class='a' style='left:1813px;top:1076px;width:123px;height:37px;background:#000;'></div>
<div class='a' style='left:962px;top:1146.5px;width:113px;height:32.5px;background:#e1e1e1;border:1px solid #adadad;box-sizing:border-box'></div>
<div class='t' style='left:1001.05px;top:1155.38px;font-size:17.5px;line-height:17.5px;color:#000;-webkit-text-stroke:0.18px rgba(255,255,255,0.8);transform:scaleX(0.9440);'>Start</div>
<div class='a' style='left:1086px;top:1146.5px;width:114px;height:32.5px;background:#cccccc;border:1px solid #bfbfbf;box-sizing:border-box'></div>
<div class='t' style='left:1125.55px;top:1155.38px;font-size:17.5px;line-height:17.5px;color:#a0a0a0;transform:scaleX(0.9694);'>Stop</div>
<div class='a' style='left:1246px;top:1146.5px;width:114px;height:32.5px;background:#e1e1e1;border:1px solid #adadad;box-sizing:border-box'></div>
<div class='t' style='left:1284.25px;top:1155.38px;font-size:17.5px;line-height:17.5px;color:#000;-webkit-text-stroke:0.18px rgba(255,255,255,0.8);transform:scaleX(0.8965);'>Clear</div>
<div class='a' style='left:1371px;top:1146.5px;width:113px;height:32.5px;background:#e1e1e1;border:1px solid #adadad;box-sizing:border-box'></div>
<div class='t' style='left:1409.25px;top:1155.38px;font-size:17.5px;line-height:17.5px;color:#000;-webkit-text-stroke:0.18px rgba(255,255,255,0.8);transform:scaleX(0.9150);'>Save</div>
<div class='a' style='left:1531px;top:1146.5px;width:113px;height:32.5px;background:#e1e1e1;border:1px solid #adadad;box-sizing:border-box'></div>
<div class='t' style='left:1562.70px;top:1155.38px;font-size:17.5px;line-height:17.5px;color:#000;-webkit-text-stroke:0.18px rgba(255,255,255,0.8);transform:scaleX(0.9109);'>CPUID</div>
<div class='a' style='left:1656px;top:1146.5px;width:113px;height:32.5px;background:#e1e1e1;border:1px solid #adadad;box-sizing:border-box'></div>
<div class='t' style='left:1668.60px;top:1155.38px;font-size:17.5px;line-height:17.5px;color:#000;-webkit-text-stroke:0.18px rgba(255,255,255,0.8);transform:scaleX(0.9305);'>Preferences</div>
<div class='a' style='left:1959.5px;top:1146.5px;width:113.0px;height:32.5px;background:#e1e1e1;border:1px solid #adadad;box-sizing:border-box'></div>
<div class='t' style='left:1994.95px;top:1155.38px;font-size:17.5px;line-height:17.5px;color:#000;-webkit-text-stroke:0.18px rgba(255,255,255,0.8);transform:scaleX(0.9408);'>Close</div>
<div class='a' style='left:952px;top:1190px;width:1130px;height:5px;background:linear-gradient(to right,#000 0,#000 21%,#8a2a08 27%,#d07818 38%,#e0a028 55%,#d06818 75%,#b03010 88%,#300000 93%,#100000 100%)'></div>
<div class='a' style='left:951px;top:1190px;width:1px;height:5px;background:#000;'></div>
<div class='a' style='left:2083px;top:0px;width:593px;height:1195px;background:#f0f0f0;'></div>
<div class='a' style='left:2083px;top:2px;width:593px;height:44px;background:#ffffff;'></div>
<div class='a' style='left:2083px;top:0px;width:593px;height:2px;background:#000;'></div>
<div class='a' style='left:2082px;top:0px;width:1px;height:1192px;background:#8c8c8c;'></div>
<div class='a' style='left:2674px;top:0px;width:2px;height:1195px;background:#000;'></div>
<svg class='a' style='left:2094px;top:12px' width='25' height='22' viewBox='0 0 25 22'>
      <path d='M3.2 1 L3.2 21' stroke='#6a6a6a' stroke-width='1.3'/><path d='M1.5 1.6 L3.5 1.6' stroke='#707070' stroke-width='1.2'/>
      <rect x='4.5' y='3.8' width='19' height='13.2' fill='#66ae5c'/>
      <rect x='6' y='17' width='11' height='2.8' fill='#a8d070'/>
      <rect x='9.8' y='8' width='5' height='5.5' fill='#c8d8cc'/>
      <rect x='15.5' y='5' width='6' height='2.5' fill='#a8dca0'/>
      <circle cx='6.8' cy='6.8' r='1.1' fill='#8a4a20'/></svg>
<div class='t' style='left:2123.80px;top:15.28px;font-size:18.5px;line-height:18.5px;color:#999999;transform:scaleX(0.9047);'>TechPowerUp GPU-Z 2.7.0</div>
<div class='a' style='left:2492px;top:23px;width:15px;height:1px;background:#808080;'></div>
<div class='a' style='left:2561px;top:16px;width:15px;height:15px;border:1px solid #d4d4d4;box-sizing:border-box'></div>
<svg class='a' style='left:2631px;top:15px' width='17' height='17' viewBox='0 0 17 17'><path d='M1 1 L16 16 M16 1 L1 16' stroke='#808080' stroke-width='1.1'/></svg>
<div class='a' style='left:2090px;top:82px;width:575px;height:1062px;border:1px solid #d9d9d9;box-sizing:border-box;background:#f0f0f0'></div>
<div class='a' style='left:2092px;top:83px;width:572px;height:1px;background:#fbfbfb'></div>
<div class='a' style='left:2092px;top:57px;width:114px;height:25px;background:#f0f0f0;border:1px solid #d9d9d9;border-bottom:none;box-sizing:border-box'></div>
<div class='t' style='left:2098.30px;top:60.27px;font-size:16.5px;line-height:16.5px;color:#000;transform:scaleX(0.9561);'>Graphics Card</div>
<div class='a' style='left:2205px;top:55px;width:73px;height:29px;background:#fdfdfd;border:1px solid #d9d9d9;border-bottom:none;box-sizing:border-box'></div>
<div class='t' style='left:2212.70px;top:58.77px;font-size:16.5px;line-height:16.5px;color:#000;transform:scaleX(0.9549);'>Sensors</div>
<div class='a' style='left:2278px;top:57px;width:82px;height:25px;background:#f0f0f0;border:1px solid #d9d9d9;border-bottom:none;box-sizing:border-box'></div>
<div class='t' style='left:2283.30px;top:60.27px;font-size:16.5px;line-height:16.5px;color:#000;transform:scaleX(0.9538);'>Advanced</div>
<div class='a' style='left:2359px;top:57px;width:82px;height:25px;background:#f0f0f0;border:1px solid #d9d9d9;border-bottom:none;box-sizing:border-box'></div>
<div class='t' style='left:2364.90px;top:60.27px;font-size:16.5px;line-height:16.5px;color:#000;transform:scaleX(0.9839);'>Validation</div>
<svg class='a' style='left:2565px;top:57px' width='18' height='12' viewBox='0 0 18 12'>
      <rect x='0.5' y='2' width='16' height='9.5' rx='1' fill='#3a3a3a'/><rect x='5' y='0.5' width='6' height='2.5' fill='#3a3a3a'/>
      <circle cx='8.5' cy='6.8' r='2.8' fill='#9a9a9a'/><circle cx='8.5' cy='6.8' r='1.6' fill='#3a3a3a'/></svg>
<svg class='a' style='left:2606px;top:57px' width='14' height='12' viewBox='0 0 14 12'>
      <path d='M2.5 6 A4.5 4.5 0 0 1 10.5 3' stroke='#111' stroke-width='2' fill='none'/><path d='M11.5 6 A4.5 4.5 0 0 1 3.5 9' stroke='#111' stroke-width='2' fill='none'/>
      <path d='M8.5 0.5 L12.5 1 L11.5 5 Z' fill='#111'/><path d='M5.5 11.5 L1.5 11 L2.5 7 Z' fill='#111'/></svg>
<div class='a' style='left:2644px;top:58px;width:14px;height:2px;background:#111;'></div>
<div class='a' style='left:2644px;top:62px;width:14px;height:2px;background:#111;'></div>
<div class='a' style='left:2644px;top:66px;width:14px;height:2px;background:#111;'></div>
<div class='a' style='left:2106px;top:99px;width:217px;height:29px;background:#f0f0f0;border-top:1.5px solid #a0a0a0;border-left:1.5px solid #a0a0a0;border-right:1px solid #fff;border-bottom:1px solid #fff;box-sizing:border-box'></div>
<div class='a' style='left:2331px;top:99px;width:104px;height:29px;background:#f0f0f0;border-top:1.5px solid #a0a0a0;border-left:1.5px solid #a0a0a0;border-right:1px solid #fff;border-bottom:1px solid #fff;box-sizing:border-box'></div>
<div class='a' style='left:2444px;top:99px;width:211px;height:29px;background:#f0f0f0;border-top:1.5px solid #a0a0a0;border-left:1.5px solid #a0a0a0;border-right:1px solid #fff;border-bottom:1px solid #fff;box-sizing:border-box'></div>
<div class='t' style='left:2111.70px;top:105.77px;font-size:16.5px;line-height:16.5px;color:#000;transform:scaleX(0.9422);'>GPU Core Clock</div>
<div class='t' style='left:2363.00px;top:105.77px;font-size:16.5px;line-height:16.5px;color:#000;transform:scaleX(0.9560);'>29.0 MHz</div>
<svg class='a' style='left:2299px;top:109px' width='15' height='8' viewBox='0 0 15 8'><path d='M0.5 0.5 L14.5 0.5 L7.5 7.5 Z' fill='#000'/></svg>
<svg class='a' style='left:0;top:0' width='2676' height='1195'><rect x='2558' y='125' width='97' height='3' fill='#f60000'/><path d='M2560.3 125 L2562.3 120 L2564.3 125 Z' fill='#f60000'/><path d='M2570 125 L2572 122 L2574 125 Z' fill='#f60000'/><path d='M2573 125 L2575 121.5 L2577 125 Z' fill='#f60000'/><path d='M2576 125 L2578 122 L2580 125 Z' fill='#f60000'/><path d='M2585.9 125 L2587.9 120 L2589.9 125 Z' fill='#f60000'/><path d='M2598.6 125 L2600.6 120.5 L2602.6 125 Z' fill='#f60000'/><path d='M2631.5 125 L2633.5 118 L2635.5 125 Z' fill='#f60000'/><path d='M2583.5 126 L2583.5 118.5' stroke='#f60000' stroke-width='1.3'/><path d='M2604.7 126 L2604.7 104' stroke='#f60000' stroke-width='1.3'/></svg>
<div class='a' style='left:2106px;top:140px;width:217px;height:29px;background:#f0f0f0;border-top:1.5px solid #a0a0a0;border-left:1.5px solid #a0a0a0;border-right:1px solid #fff;border-bottom:1px solid #fff;box-sizing:border-box'></div>
<div class='a' style='left:2331px;top:140px;width:104px;height:29px;background:#f0f0f0;border-top:1.5px solid #a0a0a0;border-left:1.5px solid #a0a0a0;border-right:1px solid #fff;border-bottom:1px solid #fff;box-sizing:border-box'></div>
<div class='a' style='left:2444px;top:140px;width:211px;height:29px;background:#f0f0f0;border-top:1.5px solid #a0a0a0;border-left:1.5px solid #a0a0a0;border-right:1px solid #fff;border-bottom:1px solid #fff;box-sizing:border-box'></div>
<div class='t' style='left:2111.70px;top:146.27px;font-size:16.5px;line-height:16.5px;color:#000;transform:scaleX(0.9363);'>GPU Memory Clock</div>
<div class='t' style='left:2355.00px;top:146.27px;font-size:16.5px;line-height:16.5px;color:#000;transform:scaleX(0.9462);'>167.0 MHz</div>
<svg class='a' style='left:2299px;top:150px' width='15' height='8' viewBox='0 0 15 8'><path d='M0.5 0.5 L14.5 0.5 L7.5 7.5 Z' fill='#000'/></svg>
<svg class='a' style='left:0;top:0' width='2676' height='1195'><rect x='2558' y='164.5' width='97' height='4.5' fill='#f60000'/><path d='M2562.5 165 L2562.5 145' stroke='#f60000' stroke-width='1.2'/><path d='M2572.3 165 L2572.3 145' stroke='#f60000' stroke-width='1.2'/><path d='M2576.8 165 L2576.8 145' stroke='#f60000' stroke-width='1.2'/><path d='M2597.3 165 L2597.3 145' stroke='#f60000' stroke-width='1.2'/><path d='M2604.6 165 L2604.6 145' stroke='#f60000' stroke-width='1.2'/><path d='M2632.5 165 L2632.5 145' stroke='#f60000' stroke-width='1.2'/><path d='M2637 165 L2637 145' stroke='#f60000' stroke-width='1.2'/></svg>
<div class='a' style='left:2106px;top:180px;width:217px;height:29px;background:#f0f0f0;border-top:1.5px solid #a0a0a0;border-left:1.5px solid #a0a0a0;border-right:1px solid #fff;border-bottom:1px solid #fff;box-sizing:border-box'></div>
<div class='a' style='left:2331px;top:180px;width:104px;height:29px;background:#f0f0f0;border-top:1.5px solid #a0a0a0;border-left:1.5px solid #a0a0a0;border-right:1px solid #fff;border-bottom:1px solid #fff;box-sizing:border-box'></div>
<div class='a' style='left:2444px;top:180px;width:211px;height:29px;background:#f0f0f0;border-top:1.5px solid #a0a0a0;border-left:1.5px solid #a0a0a0;border-right:1px solid #fff;border-bottom:1px solid #fff;box-sizing:border-box'></div>
<div class='t' style='left:2111.70px;top:186.77px;font-size:16.5px;line-height:16.5px;color:#000;transform:scaleX(0.9337);'>SOC Clock</div>
<div class='t' style='left:2353.90px;top:186.77px;font-size:16.5px;line-height:16.5px;color:#000;transform:scaleX(0.9599);'>600.0 MHz</div>
<svg class='a' style='left:2299px;top:190px' width='15' height='8' viewBox='0 0 15 8'><path d='M0.5 0.5 L14.5 0.5 L7.5 7.5 Z' fill='#000'/></svg>
<svg class='a' style='left:0;top:0' width='2676' height='1195'><rect x='2558' y='192' width='97' height='17' fill='#f60000'/></svg>
<div class='a' style='left:2106px;top:221px;width:217px;height:29px;background:#f0f0f0;border-top:1.5px solid #a0a0a0;border-left:1.5px solid #a0a0a0;border-right:1px solid #fff;border-bottom:1px solid #fff;box-sizing:border-box'></div>
<div class='a' style='left:2331px;top:221px;width:104px;height:29px;background:#f0f0f0;border-top:1.5px solid #a0a0a0;border-left:1.5px solid #a0a0a0;border-right:1px solid #fff;border-bottom:1px solid #fff;box-sizing:border-box'></div>
<div class='a' style='left:2444px;top:221px;width:211px;height:29px;background:#f0f0f0;border-top:1.5px solid #a0a0a0;border-left:1.5px solid #a0a0a0;border-right:1px solid #fff;border-bottom:1px solid #fff;box-sizing:border-box'></div>
<div class='t' style='left:2111.70px;top:227.27px;font-size:16.5px;line-height:16.5px;color:#000;transform:scaleX(0.9686);'>GPU Temperature</div>
<div class='t' style='left:2380.00px;top:227.27px;font-size:16.5px;line-height:16.5px;color:#000;transform:scaleX(0.9145);'>29.0 °C</div>
<svg class='a' style='left:2299px;top:231px' width='15' height='8' viewBox='0 0 15 8'><path d='M0.5 0.5 L14.5 0.5 L7.5 7.5 Z' fill='#000'/></svg>
<svg class='a' style='left:0;top:0' width='2676' height='1195'><rect x='2558' y='246.5' width='97' height='3' fill='#f60000'/></svg>
<div class='a' style='left:2106px;top:261px;width:217px;height:29px;background:#f0f0f0;border-top:1.5px solid #a0a0a0;border-left:1.5px solid #a0a0a0;border-right:1px solid #fff;border-bottom:1px solid #fff;box-sizing:border-box'></div>
<div class='a' style='left:2331px;top:261px;width:104px;height:29px;background:#f0f0f0;border-top:1.5px solid #a0a0a0;border-left:1.5px solid #a0a0a0;border-right:1px solid #fff;border-bottom:1px solid #fff;box-sizing:border-box'></div>
<div class='a' style='left:2444px;top:261px;width:211px;height:29px;background:#f0f0f0;border-top:1.5px solid #a0a0a0;border-left:1.5px solid #a0a0a0;border-right:1px solid #fff;border-bottom:1px solid #fff;box-sizing:border-box'></div>
<div class='t' style='left:2111.70px;top:267.78px;font-size:16.5px;line-height:16.5px;color:#000;transform:scaleX(0.9743);'>GPU Temperature (Hot Spot)</div>
<div class='t' style='left:2380.00px;top:267.78px;font-size:16.5px;line-height:16.5px;color:#000;transform:scaleX(0.9145);'>32.0 °C</div>
<svg class='a' style='left:2299px;top:271px' width='15' height='8' viewBox='0 0 15 8'><path d='M0.5 0.5 L14.5 0.5 L7.5 7.5 Z' fill='#000'/></svg>
<svg class='a' style='left:0;top:0' width='2676' height='1195'><rect x='2558' y='286.5' width='97' height='3' fill='#f60000'/></svg>
<div class='a' style='left:2106px;top:302px;width:217px;height:29px;background:#f0f0f0;border-top:1.5px solid #a0a0a0;border-left:1.5px solid #a0a0a0;border-right:1px solid #fff;border-bottom:1px solid #fff;box-sizing:border-box'></div>
<div class='a' style='left:2331px;top:302px;width:104px;height:29px;background:#f0f0f0;border-top:1.5px solid #a0a0a0;border-left:1.5px solid #a0a0a0;border-right:1px solid #fff;border-bottom:1px solid #fff;box-sizing:border-box'></div>
<div class='a' style='left:2444px;top:302px;width:211px;height:29px;background:#f0f0f0;border-top:1.5px solid #a0a0a0;border-left:1.5px solid #a0a0a0;border-right:1px solid #fff;border-bottom:1px solid #fff;box-sizing:border-box'></div>
<div class='t' style='left:2111.70px;top:308.28px;font-size:16.5px;line-height:16.5px;color:#000;transform:scaleX(0.9709);'>HBM Temperature</div>
<div class='t' style='left:2380.00px;top:308.28px;font-size:16.5px;line-height:16.5px;color:#000;transform:scaleX(0.9145);'>29.0 °C</div>
<svg class='a' style='left:2299px;top:312px' width='15' height='8' viewBox='0 0 15 8'><path d='M0.5 0.5 L14.5 0.5 L7.5 7.5 Z' fill='#000'/></svg>
<svg class='a' style='left:0;top:0' width='2676' height='1195'><rect x='2558' y='327.5' width='97' height='3' fill='#f60000'/></svg>
<div class='a' style='left:2106px;top:342px;width:217px;height:29px;background:#f0f0f0;border-top:1.5px solid #a0a0a0;border-left:1.5px solid #a0a0a0;border-right:1px solid #fff;border-bottom:1px solid #fff;box-sizing:border-box'></div>
<div class='a' style='left:2331px;top:342px;width:104px;height:29px;background:#f0f0f0;border-top:1.5px solid #a0a0a0;border-left:1.5px solid #a0a0a0;border-right:1px solid #fff;border-bottom:1px solid #fff;box-sizing:border-box'></div>
<div class='a' style='left:2444px;top:342px;width:211px;height:29px;background:#f0f0f0;border-top:1.5px solid #a0a0a0;border-left:1.5px solid #a0a0a0;border-right:1px solid #fff;border-bottom:1px solid #fff;box-sizing:border-box'></div>
<div class='t' style='left:2111.70px;top:348.78px;font-size:16.5px;line-height:16.5px;color:#000;transform:scaleX(0.9559);'>Fan Speed (RPM)</div>
<div class='t' style='left:2383.50px;top:348.78px;font-size:16.5px;line-height:16.5px;color:#000;transform:scaleX(0.9318);'>0 RPM</div>
<svg class='a' style='left:2299px;top:352px' width='15' height='8' viewBox='0 0 15 8'><path d='M0.5 0.5 L14.5 0.5 L7.5 7.5 Z' fill='#000'/></svg>
<svg class='a' style='left:0;top:0' width='2676' height='1195'><rect x='2557.5' y='360' width='5' height='11' fill='#f60000'/></svg>
<div class='a' style='left:2106px;top:383px;width:217px;height:29px;background:#f0f0f0;border-top:1.5px solid #a0a0a0;border-left:1.5px solid #a0a0a0;border-right:1px solid #fff;border-bottom:1px solid #fff;box-sizing:border-box'></div>
<div class='a' style='left:2331px;top:383px;width:104px;height:29px;background:#f0f0f0;border-top:1.5px solid #a0a0a0;border-left:1.5px solid #a0a0a0;border-right:1px solid #fff;border-bottom:1px solid #fff;box-sizing:border-box'></div>
<div class='a' style='left:2444px;top:383px;width:211px;height:29px;background:#f0f0f0;border-top:1.5px solid #a0a0a0;border-left:1.5px solid #a0a0a0;border-right:1px solid #fff;border-bottom:1px solid #fff;box-sizing:border-box'></div>
<div class='t' style='left:2111.70px;top:389.28px;font-size:16.5px;line-height:16.5px;color:#000;transform:scaleX(0.9587);'>Fan Speed (%)</div>
<div class='t' style='left:2404.00px;top:389.28px;font-size:16.5px;line-height:16.5px;color:#000;transform:scaleX(0.9319);'>0 %</div>
<svg class='a' style='left:2299px;top:393px' width='15' height='8' viewBox='0 0 15 8'><path d='M0.5 0.5 L14.5 0.5 L7.5 7.5 Z' fill='#000'/></svg>
<div class='a' style='left:2106px;top:423px;width:217px;height:29px;background:#f0f0f0;border-top:1.5px solid #a0a0a0;border-left:1.5px solid #a0a0a0;border-right:1px solid #fff;border-bottom:1px solid #fff;box-sizing:border-box'></div>
<div class='a' style='left:2331px;top:423px;width:104px;height:29px;background:#f0f0f0;border-top:1.5px solid #a0a0a0;border-left:1.5px solid #a0a0a0;border-right:1px solid #fff;border-bottom:1px solid #fff;box-sizing:border-box'></div>
<div class='a' style='left:2444px;top:423px;width:211px;height:29px;background:#f0f0f0;border-top:1.5px solid #a0a0a0;border-left:1.5px solid #a0a0a0;border-right:1px solid #fff;border-bottom:1px solid #fff;box-sizing:border-box'></div>
<div class='t' style='left:2111.70px;top:429.78px;font-size:16.5px;line-height:16.5px;color:#000;transform:scaleX(0.9605);'>GPU Load</div>
<div class='t' style='left:2404.00px;top:429.78px;font-size:16.5px;line-height:16.5px;color:#000;transform:scaleX(0.9319);'>0 %</div>
<svg class='a' style='left:2299px;top:433px' width='15' height='8' viewBox='0 0 15 8'><path d='M0.5 0.5 L14.5 0.5 L7.5 7.5 Z' fill='#000'/></svg>
<svg class='a' style='left:0;top:0' width='2676' height='1195'><rect x='2562' y='449' width='1.5' height='2' fill='#f60000'/><rect x='2576' y='448' width='1.5' height='3' fill='#f60000'/><rect x='2601' y='448' width='1.5' height='3' fill='#f60000'/><rect x='2608' y='441' width='1.5' height='10' fill='#f60000'/><rect x='2632' y='448' width='1.5' height='3' fill='#f60000'/><rect x='2637' y='448' width='1.5' height='3' fill='#f60000'/></svg>
<div class='a' style='left:2106px;top:464px;width:217px;height:29px;background:#f0f0f0;border-top:1.5px solid #a0a0a0;border-left:1.5px solid #a0a0a0;border-right:1px solid #fff;border-bottom:1px solid #fff;box-sizing:border-box'></div>
<div class='a' style='left:2331px;top:464px;width:104px;height:29px;background:#f0f0f0;border-top:1.5px solid #a0a0a0;border-left:1.5px solid #a0a0a0;border-right:1px solid #fff;border-bottom:1px solid #fff;box-sizing:border-box'></div>
<div class='a' style='left:2444px;top:464px;width:211px;height:29px;background:#f0f0f0;border-top:1.5px solid #a0a0a0;border-left:1.5px solid #a0a0a0;border-right:1px solid #fff;border-bottom:1px solid #fff;box-sizing:border-box'></div>
<div class='t' style='left:2111.70px;top:470.28px;font-size:16.5px;line-height:16.5px;color:#000;transform:scaleX(0.9439);'>GPU only Power Draw</div>
<div class='t' style='left:2390.00px;top:470.28px;font-size:16.5px;line-height:16.5px;color:#000;transform:scaleX(0.9395);'>3.0 W</div>
<svg class='a' style='left:2299px;top:474px' width='15' height='8' viewBox='0 0 15 8'><path d='M0.5 0.5 L14.5 0.5 L7.5 7.5 Z' fill='#000'/></svg>
<svg class='a' style='left:0;top:0' width='2676' height='1195'><path d='M2597.5 469 L2597.5 492' stroke='#f60000' stroke-width='1.3'/></svg>
<div class='a' style='left:2106px;top:504px;width:217px;height:29px;background:#f0f0f0;border-top:1.5px solid #a0a0a0;border-left:1.5px solid #a0a0a0;border-right:1px solid #fff;border-bottom:1px solid #fff;box-sizing:border-box'></div>
<div class='a' style='left:2331px;top:504px;width:104px;height:29px;background:#f0f0f0;border-top:1.5px solid #a0a0a0;border-left:1.5px solid #a0a0a0;border-right:1px solid #fff;border-bottom:1px solid #fff;box-sizing:border-box'></div>
<div class='a' style='left:2444px;top:504px;width:211px;height:29px;background:#f0f0f0;border-top:1.5px solid #a0a0a0;border-left:1.5px solid #a0a0a0;border-right:1px solid #fff;border-bottom:1px solid #fff;box-sizing:border-box'></div>
<div class='t' style='left:2111.70px;top:510.78px;font-size:16.5px;line-height:16.5px;color:#000;transform:scaleX(0.9556);'>Memory Usage (Dedicated)</div>
<div class='t' style='left:2376.00px;top:510.78px;font-size:16.5px;line-height:16.5px;color:#000;transform:scaleX(0.9582);'>260 MB</div>
<svg class='a' style='left:2299px;top:514px' width='15' height='8' viewBox='0 0 15 8'><path d='M0.5 0.5 L14.5 0.5 L7.5 7.5 Z' fill='#000'/></svg>
<svg class='a' style='left:0;top:0' width='2676' height='1195'><rect x='2558' y='530' width='97' height='1.3' fill='#f60000'/></svg>
<div class='a' style='left:2106px;top:545px;width:217px;height:29px;background:#f0f0f0;border-top:1.5px solid #a0a0a0;border-left:1.5px solid #a0a0a0;border-right:1px solid #fff;border-bottom:1px solid #fff;box-sizing:border-box'></div>
<div class='a' style='left:2331px;top:545px;width:104px;height:29px;background:#f0f0f0;border-top:1.5px solid #a0a0a0;border-left:1.5px solid #a0a0a0;border-right:1px solid #fff;border-bottom:1px solid #fff;box-sizing:border-box'></div>
<div class='a' style='left:2444px;top:545px;width:211px;height:29px;background:#f0f0f0;border-top:1.5px solid #a0a0a0;border-left:1.5px solid #a0a0a0;border-right:1px solid #fff;border-bottom:1px solid #fff;box-sizing:border-box'></div>
<div class='t' style='left:2111.70px;top:551.28px;font-size:16.5px;line-height:16.5px;color:#000;transform:scaleX(0.9456);'>Memory Usage (Dynamic)</div>
<div class='t' style='left:2376.00px;top:551.28px;font-size:16.5px;line-height:16.5px;color:#000;transform:scaleX(0.9582);'>163 MB</div>
<svg class='a' style='left:2299px;top:555px' width='15' height='8' viewBox='0 0 15 8'><path d='M0.5 0.5 L14.5 0.5 L7.5 7.5 Z' fill='#000'/></svg>
<svg class='a' style='left:0;top:0' width='2676' height='1195'><rect x='2558' y='571' width='97' height='1.3' fill='#f60000'/></svg>
<div class='a' style='left:2106px;top:585px;width:217px;height:29px;background:#f0f0f0;border-top:1.5px solid #a0a0a0;border-left:1.5px solid #a0a0a0;border-right:1px solid #fff;border-bottom:1px solid #fff;box-sizing:border-box'></div>
<div class='a' style='left:2331px;top:585px;width:104px;height:29px;background:#f0f0f0;border-top:1.5px solid #a0a0a0;border-left:1.5px solid #a0a0a0;border-right:1px solid #fff;border-bottom:1px solid #fff;box-sizing:border-box'></div>
<div class='a' style='left:2444px;top:585px;width:211px;height:29px;background:#f0f0f0;border-top:1.5px solid #a0a0a0;border-left:1.5px solid #a0a0a0;border-right:1px solid #fff;border-bottom:1px solid #fff;box-sizing:border-box'></div>
<div class='t' style='left:2111.70px;top:591.78px;font-size:16.5px;line-height:16.5px;color:#000;transform:scaleX(0.9580);'>VDDC</div>
<div class='t' style='left:2367.00px;top:591.78px;font-size:16.5px;line-height:16.5px;color:#000;transform:scaleX(0.9612);'>0.7750 V</div>
<svg class='a' style='left:2299px;top:595px' width='15' height='8' viewBox='0 0 15 8'><path d='M0.5 0.5 L14.5 0.5 L7.5 7.5 Z' fill='#000'/></svg>
<svg class='a' style='left:0;top:0' width='2676' height='1195'><rect x='2558' y='588.5' width='97' height='24.5' fill='#f60000'/></svg>
<div class='a' style='left:2102px;top:1110px;width:20px;height:20px;border:1.3px solid #333;box-sizing:border-box;background:#fff'></div>
<div class='t' style='left:2126.30px;top:1111.97px;font-size:16.5px;line-height:16.5px;color:#000;transform:scaleX(0.9530);'>Log to file</div>
<div class='a' style='left:2090px;top:1149px;width:326px;height:28px;border:1px solid #acacac;box-sizing:border-box;background:#e5e5e5'></div>
<div class='t' style='left:2094.30px;top:1154.67px;font-size:16.5px;line-height:16.5px;color:#000;transform:scaleX(0.9764);'>Radeon RX Vega</div>
<svg class='a' style='left:2396px;top:1158px' width='13' height='9' viewBox='0 0 13 9'><path d='M1 1.5 L6.5 7 L12 1.5' stroke='#333' stroke-width='1.3' fill='none'/></svg>
<div class='a' style='left:2556px;top:1150px;width:111px;height:32px;border:1px solid #adadad;box-sizing:border-box;background:#e1e1e1'></div>
<div class='t' style='left:2591.30px;top:1158.47px;font-size:16.5px;line-height:16.5px;color:#000;transform:scaleX(0.9339);'>Close</div>
<div class='a' style='left:2082px;top:1191px;width:594px;height:4px;background:linear-gradient(to right,#200008,#8a1010 25%,#400010 45%,#100008 100%)'></div>
</body></html>
